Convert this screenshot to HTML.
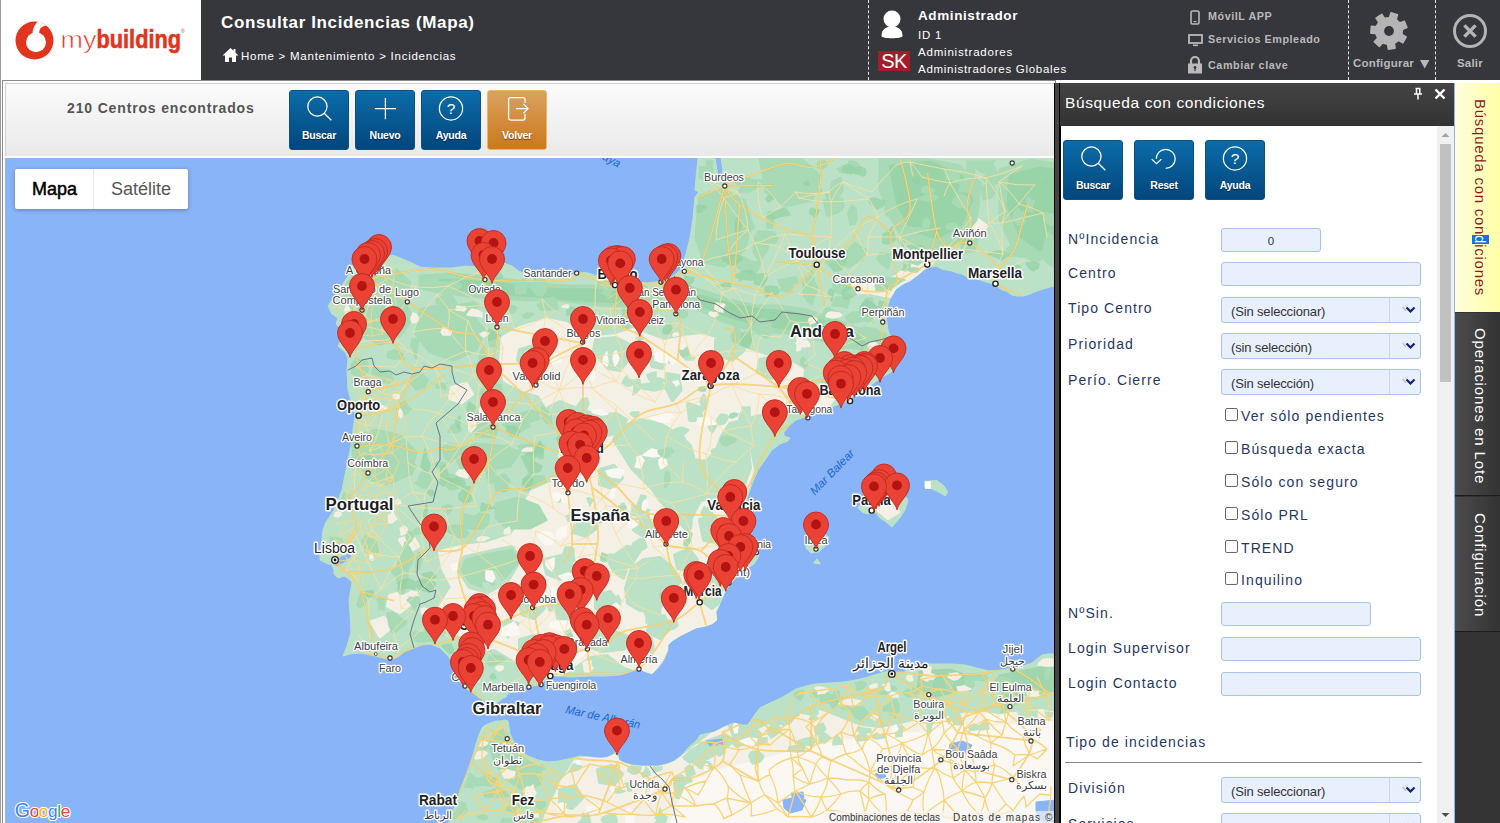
<!DOCTYPE html>
<html lang="es">
<head>
<meta charset="utf-8">
<title>Consultar Incidencias (Mapa)</title>
<style>
*{box-sizing:border-box;margin:0;padding:0}
html,body{width:1500px;height:823px;overflow:hidden;background:#fff;font-family:"Liberation Sans",sans-serif;}
body{position:relative}
.abs{position:absolute}
/* ---------- header ---------- */
#hdr{left:0;top:0;width:1500px;height:80px;background:#36373c;}
#logo{left:0;top:0;width:201px;height:80px;background:#fff;border-left:1px solid #9a9a9a}
#title{left:221px;top:13px;color:#fff;font-weight:bold;font-size:17px;letter-spacing:.62px;white-space:nowrap}
#crumb{left:241px;top:50px;color:#fff;font-size:11.5px;letter-spacing:.75px;white-space:nowrap}
.dash{top:0;width:0;height:80px;border-left:1px dashed #e8e8e8}
.u{color:#fff;white-space:nowrap;left:918px}
.lnk{color:#b9b9b9;font-weight:bold;font-size:10.8px;letter-spacing:.55px;white-space:nowrap;left:1208px}
/* ---------- toolbar ---------- */
#frame{left:2px;top:80px;width:1054px;height:745px;border:1px solid #8a8a8a;background:#fff}
#tbar{left:5px;top:83px;width:1050px;height:74px;background:linear-gradient(#fbfbfb,#e9e9e9);border:1px solid #d0d0d0;border-bottom:1px solid #fff}
#found{left:67px;top:100px;color:#555;font-weight:bold;font-size:14px;letter-spacing:.85px;white-space:nowrap}
.btn{width:60px;height:60px;border-radius:3px;background:linear-gradient(#0b6ca9,#03467c);border:1px solid #0a4f86;color:#fff;font-weight:bold;font-size:11px;text-align:center;text-shadow:0 1px 1px rgba(0,0,0,.5)}
.btn span{position:absolute;left:0;right:0;top:38px;letter-spacing:-.25px;font-size:10.5px}
.btn svg{position:absolute;left:13px;top:3px}
.btn.or{background:linear-gradient(#d9a25f,#cc781a);border:1px solid #ecb568}
/* ---------- map ---------- */
#map{left:5px;top:158px;width:1049px;height:665px;background:#8ab4f8;overflow:hidden}
/* ---------- right panel ---------- */
#pnl{left:1054px;top:83px;width:400px;height:740px;background:#fff;border-left:6px solid #444;box-shadow:inset 1px 0 0 #000}#pnlb{left:1054px;top:83px;width:6px;height:740px;background:#444;border-left:1px solid #000;border-right:1px solid #000}
#pnlh{left:1060px;top:83px;width:394px;height:43px;background:linear-gradient(#444,#333);color:#fff;font-size:15.5px;letter-spacing:.62px;padding:11px 0 0 5px}
.lab{left:1068px;margin-top:1px;color:#1f3864;font-size:14px;letter-spacing:1.1px;white-space:nowrap}
.inp{left:1221px;height:24px;background:#e8f0fd;border:1px solid #a9c3e8;border-radius:3px}
.sel{left:1221px;width:200px;height:26px;background:#e8f0fd;border:1px solid #a9c3e8;border-radius:3px;color:#333;font-size:13px;padding:6px 0 0 9px;letter-spacing:-.15px}
.sel i{position:absolute;right:30px;top:0;height:24px;width:1px;background:#c5d5ec}
.sel svg{position:absolute;right:2px;top:6px}
.chk{left:1225px;width:13px;height:13px;border:1px solid #666;border-radius:2px;background:#fff}
.cl{left:1241px;color:#1f3864;font-size:14px;letter-spacing:1.1px;white-space:nowrap}
/* ---------- tabs ---------- */
.tab{left:1455px;width:45px;color:#fff;font-size:15px;letter-spacing:.9px}
.tab b{position:absolute;font-weight:normal;white-space:nowrap;transform-origin:0 0;transform:rotate(90deg);left:34px}
</style>
</head>
<body>
<!-- HEADER -->
<div id="hdr" class="abs"></div>
<div id="logo" class="abs">
<svg width="200" height="80" viewBox="0 0 200 80" style="position:absolute;left:0;top:0">
<circle cx="33.5" cy="40.5" r="19" fill="#e1351d"/>
<circle cx="35" cy="42.3" r="10" fill="#fff"/>
<path d="M31.5 34.5 C31.5 28 34.5 24 37 21.3 L45.8 25.4 C41 25.8 37.6 28.5 38.4 33.8 Z" fill="#fff"/>
<text x="59.5" y="47.6" font-family="Liberation Sans, sans-serif" font-size="24.5" fill="#e1351d" stroke="#fff" stroke-width="0.6" textLength="36" lengthAdjust="spacingAndGlyphs">my</text>
<text x="95.5" y="47.6" font-family="Liberation Sans, sans-serif" font-weight="bold" font-size="25.5" fill="#e1351d" stroke="#e1351d" stroke-width="0.6" textLength="84.5" lengthAdjust="spacingAndGlyphs">building</text>
<text x="180" y="33" font-family="Liberation Sans, sans-serif" font-size="5" fill="#e1351d">®</text>
</svg>
</div>
<div id="title" class="abs">Consultar Incidencias (Mapa)</div>
<svg class="abs" style="left:222px;top:47px" width="17" height="16" viewBox="0 0 17 16"><path d="M8.5 1 L0.5 8.5 H3 V15 H7 V10.5 H10 V15 H14 V8.5 H16.5 L13.5 5.7 V2 H11.5 V3.8 Z" fill="#fff"/></svg>
<div id="crumb" class="abs">Home &gt; Mantenimiento &gt; Incidencias</div>
<div class="abs dash" style="left:868px"></div>
<div class="abs dash" style="left:1348px"></div>
<div class="abs dash" style="left:1435px"></div>
<!-- user -->
<svg class="abs" style="left:880px;top:10px" width="24" height="30" viewBox="0 0 24 30"><circle cx="12" cy="9" r="8.5" fill="#fff"/><path d="M1.5 26 C1.5 19 6 16.5 12 16.5 C18 16.5 22.5 19 22.5 26 C22.5 29 1.5 29 1.5 26Z" fill="#fff"/></svg>
<div class="abs" style="left:878px;top:51px;width:32px;height:20px;background:#a31d2b;color:#fff;font-size:20px;line-height:20px;text-align:center;letter-spacing:-.5px">SK</div>
<div class="abs u" style="top:8px;font-weight:bold;font-size:13.5px;letter-spacing:.6px">Administrador</div>
<div class="abs u" style="top:29px;font-size:11.5px;letter-spacing:.8px">ID 1</div>
<div class="abs u" style="top:46px;font-size:11.5px;letter-spacing:.8px">Administradores</div>
<div class="abs u" style="top:63px;font-size:11.5px;letter-spacing:.72px">Administradores Globales</div>
<!-- links -->
<svg class="abs" style="left:1190px;top:10px" width="10" height="15" viewBox="0 0 10 15"><rect x="1" y="1" width="8" height="13" rx="1.5" fill="none" stroke="#b9b9b9" stroke-width="1.6"/><rect x="3.5" y="11" width="3" height="1.2" fill="#b9b9b9"/></svg>
<svg class="abs" style="left:1188px;top:34px" width="15" height="13" viewBox="0 0 15 13"><rect x="1" y="1" width="13" height="8" fill="none" stroke="#b9b9b9" stroke-width="1.8"/><rect x="5" y="10.5" width="5" height="1.6" fill="#b9b9b9"/></svg>
<svg class="abs" style="left:1187px;top:55px" width="16" height="19" viewBox="0 0 16 19"><path d="M4 9 V6 a4 4 0 0 1 8 0 V9" fill="none" stroke="#b9b9b9" stroke-width="2.2"/><rect x="1" y="8.5" width="14" height="10" fill="#b9b9b9"/><circle cx="8" cy="12.5" r="1.4" fill="#35353b"/><rect x="7.4" y="13" width="1.2" height="3" fill="#35353b"/></svg>
<div class="abs lnk" style="top:10px">MóvilL APP</div>
<div class="abs lnk" style="top:33px">Servicios Empleado</div>
<div class="abs lnk" style="top:59px">Cambiar clave</div>
<!-- gear -->
<svg class="abs" style="left:1368px;top:10px" width="42" height="42" viewBox="-21 -21 42 42"><g fill="#b4b4b4"><circle r="14"/><rect x="-4.2" y="-18.7" width="8.4" height="8" rx="0.8" transform="rotate(17.0)"/><rect x="-4.2" y="-18.7" width="8.4" height="8" rx="0.8" transform="rotate(68.4)"/><rect x="-4.2" y="-18.7" width="8.4" height="8" rx="0.8" transform="rotate(119.9)"/><rect x="-4.2" y="-18.7" width="8.4" height="8" rx="0.8" transform="rotate(171.3)"/><rect x="-4.2" y="-18.7" width="8.4" height="8" rx="0.8" transform="rotate(222.7)"/><rect x="-4.2" y="-18.7" width="8.4" height="8" rx="0.8" transform="rotate(274.1)"/><rect x="-4.2" y="-18.7" width="8.4" height="8" rx="0.8" transform="rotate(325.6)"/></g><circle r="4.9" fill="#35353b"/></svg>
<div class="abs" style="left:1353px;top:57px;color:#b9b9b9;font-weight:bold;font-size:11.5px;letter-spacing:.22px;white-space:nowrap">Configurar</div><svg class="abs" style="left:1419.5px;top:59.5px" width="10" height="9"><path d="M0 0 H9.4 L4.7 8.4Z" fill="#b9b9b9"/></svg>
<svg class="abs" style="left:1452px;top:13px" width="36" height="36" viewBox="-18 -18 36 36"><circle r="15.5" fill="none" stroke="#b4b4b4" stroke-width="3"/><path d="M-5.6 -5.6 L5.6 5.6 M5.6 -5.6 L-5.6 5.6" stroke="#b4b4b4" stroke-width="3.4"/></svg>
<div class="abs" style="left:1457px;top:57px;color:#b9b9b9;font-weight:bold;font-size:11.5px;letter-spacing:.2px">Salir</div>

<div class="abs" style="left:0;top:0;width:1px;height:823px;background:#9a9a9a"></div>
<!-- TOOLBAR -->
<div id="frame" class="abs"></div>
<div id="tbar" class="abs"></div>
<div id="found" class="abs">210 Centros encontrados</div>
<div class="abs btn" style="left:289px;top:90px"><svg width="32" height="32" viewBox="0 0 32 32"><circle cx="14.4" cy="12.5" r="9.6" fill="none" stroke="#fff" stroke-width="1.25"/><path d="M21.2 19.3 L28.3 26.2" stroke="#fff" stroke-width="1.35"/></svg><span>Buscar</span></div>
<div class="abs btn" style="left:355px;top:90px"><svg width="32" height="32" viewBox="0 0 32 32"><path d="M16.4 4 V25.2 M5.8 14.6 H27" stroke="#fff" stroke-width="1.25"/></svg><span>Nuevo</span></div>
<div class="abs btn" style="left:421px;top:90px"><svg width="32" height="32" viewBox="0 0 32 32"><circle cx="16" cy="14.4" r="11.6" fill="none" stroke="#fff" stroke-width="1.25"/><text x="16" y="20" text-anchor="middle" font-family="Liberation Sans, sans-serif" font-weight="normal" font-size="15.5" fill="#fff" style="text-shadow:none">?</text></svg><span>Ayuda</span></div>
<div class="abs btn or" style="left:487px;top:90px"><svg width="32" height="32" viewBox="0 0 32 32"><path d="M24 9 V5.6 a2 2 0 0 0 -2 -2 H9.6 a2 2 0 0 0 -2 2 V24 a2 2 0 0 0 2 2 H22 a2 2 0 0 0 2 -2 V20" fill="none" stroke="#fff" stroke-width="1.25"/><path d="M15 14.6 H27 M22.4 10 L27 14.6 L22.4 19.2" fill="none" stroke="#fff" stroke-width="1.25"/></svg><span>Volver</span></div>

<!-- MAP -->
<div id="map" class="abs">
<svg width="1049" height="665" viewBox="5 158 1049 665" style="position:absolute;left:0;top:0;font-family:'Liberation Sans',sans-serif">
<defs><g id="mk"><path d="M0 24.4 C-1.2 17 -12.5 9.5 -12.5 0 A12.5 12.5 0 0 1 12.5 0 C12.5 9.5 1.2 17 0 24.4Z" fill="#ea4335" stroke="#c0281f" stroke-width="0.9"/><circle r="4.9" fill="#b31412"/></g></defs>
<g stroke-linejoin="round">
<path d="M698 158 L696 178 L695 190 L699 192 L695 197 L693 218 L690 238 L686 254 L682 268 L676 274 L667 279.5 L659 281.5 L647 283 L635 281.5 L625 281 L615 279.5 L604 277 L594 275 L586 272.5 L577 273 L568 276 L560 276 L550 276 L540 275 L530 274 L520 272 L512 266 L504 263 L496 265 L480 267 L466 266 L452 268 L440 268 L430 268 L420 267 L410 262 L398 257 L392 255 L385 258 L375 256 L368 258 L360 262 L352 266 L347 268 L350 274 L346 279 L341 287 L334 297 L328 306 L332 314 L338 318 L336 324 L340 328 L337 334 L341 340 L338 346 L345 352 L348 358 L347 370 L348 390 L352 404 L355 416 L353 430 L351 446 L348 460 L346 470 L342 490 L334 510 L326 522 L323 530 L322 540 L320 552 L320 560 L326 563 L332 565 L334 570 L334 574 L338 578 L345 576 L352 582 L349 600 L350 614 L351 632 L347 646 L343 656 L350 654 L360 653 L376 656 L390 660 L398 657 L404 652 L414 648 L422 645 L430 644 L440 648 L448 656 L452 662 L456 672 L460 680 L463 686 L468 690 L472 692 L478 697 L485 701 L492 703 L497 703 L502 699 L506 697 L508 693 L516 692 L528 687 L540 684.5 L550 676 L560 676 L572 677 L590 676 L605 676 L620 675 L630 672 L638 669 L646 672 L652 674 L658 668 L664 660 L668 650 L668 645 L672 641 L680 636 L696 628 L706 626 L712 624 L717 620 L716 612 L718 608 L724 594 L730 584 L740 574 L748 568 L754 564 L759 556 L756 548 L750 538 L748 532 L746 515 L747 498 L752 484 L758 470 L765 460 L772 450 L780 444 L788 441 L790 438 L784 436 L784 432 L790 425 L796 420 L808 416 L818 412 L828 408 L840 404 L849 400 L858 394 L866 388 L874 383 L880 378 L888 374 L894 370 L898 362 L897 355 L896 350 L893 344 L895 339 L890 336 L888 330 L886 315 L888 305 L890 299 L896 289 L903 284 L910 281 L918 275 L925 269 L931 267 L936 266 L942 269 L946 270 L952 271 L957 273 L962 274 L967 277 L975 278 L983 281 L990 283 L996 286 L1002 290 L1006 291 L1012 295 L1017 296 L1024 296 L1030 294 L1037 291 L1043 289 L1050 287 L1056 286 L1056 158Z" fill="#bbe2c6" stroke="#bbe2c6" stroke-width="1"/>
<path d="M448 825 L452 812 L456 805 L460 790 L466 775 L470 764 L474 752 L476 744 L479 735 L482 728 L484 726 L490 723 L496 721 L500 721 L505 720 L508 721 L509 727 L510 734 L513 740 L516 746 L522 752 L528 756 L538 760 L548 762 L558 761 L568 759 L580 756 L590 757 L600 758 L608 757 L614 754 L616 750 L618 755 L619 760 L625 763 L632 765 L642 766 L650 766 L658 766 L667 764 L674 761 L681 756 L688 748 L697 740 L700 735 L714 732 L724 727 L734 723 L742 725 L748 725 L754 716 L760 708 L770 703 L779 699 L788 694 L796 689 L806 686 L815 684 L830 683 L844 682 L856 680 L868 677 L878 674 L888 671 L896 672 L904 672 L910 668 L916 666 L928 664 L940 664 L952 664 L965 665 L977 668 L989 671 L1000 670 L1013 668 L1023 666 L1032 663 L1038 658 L1042 655 L1048 654 L1056 654 L1056 825Z" fill="#bbe2c6" stroke="#bbe2c6" stroke-width="1"/>
<path d="M858 508 L861 504 L870 497 L880 490 L892 485 L893 490 L897 492 L903 493 L908 500 L905 510 L899 519 L892 527 L886 522 L880 518 L876 513 L872 511 L868 514 L862 512Z" fill="#bbe2c6" stroke="#bbe2c6" stroke-width="1"/>
<path d="M924.5 481.3 L937 480.6 L944 486 L947.5 491.8 L945.4 496 L938.4 491.8 L930 488 L925 488Z" fill="#bbe2c6" stroke="#bbe2c6" stroke-width="1"/>
<path d="M806 540 L812 534 L822 532 L829 537 L826 545 L819 552 L811 553 L806 548Z" fill="#bbe2c6" stroke="#bbe2c6" stroke-width="1"/>
<path d="M813.5 563 L817 559 L820.5 564Z" fill="#bbe2c6" stroke="#bbe2c6" stroke-width="1"/>
</g>
<clipPath id="land"><path d="M698 158 L696 178 L695 190 L699 192 L695 197 L693 218 L690 238 L686 254 L682 268 L676 274 L667 279.5 L659 281.5 L647 283 L635 281.5 L625 281 L615 279.5 L604 277 L594 275 L586 272.5 L577 273 L568 276 L560 276 L550 276 L540 275 L530 274 L520 272 L512 266 L504 263 L496 265 L480 267 L466 266 L452 268 L440 268 L430 268 L420 267 L410 262 L398 257 L392 255 L385 258 L375 256 L368 258 L360 262 L352 266 L347 268 L350 274 L346 279 L341 287 L334 297 L328 306 L332 314 L338 318 L336 324 L340 328 L337 334 L341 340 L338 346 L345 352 L348 358 L347 370 L348 390 L352 404 L355 416 L353 430 L351 446 L348 460 L346 470 L342 490 L334 510 L326 522 L323 530 L322 540 L320 552 L320 560 L326 563 L332 565 L334 570 L334 574 L338 578 L345 576 L352 582 L349 600 L350 614 L351 632 L347 646 L343 656 L350 654 L360 653 L376 656 L390 660 L398 657 L404 652 L414 648 L422 645 L430 644 L440 648 L448 656 L452 662 L456 672 L460 680 L463 686 L468 690 L472 692 L478 697 L485 701 L492 703 L497 703 L502 699 L506 697 L508 693 L516 692 L528 687 L540 684.5 L550 676 L560 676 L572 677 L590 676 L605 676 L620 675 L630 672 L638 669 L646 672 L652 674 L658 668 L664 660 L668 650 L668 645 L672 641 L680 636 L696 628 L706 626 L712 624 L717 620 L716 612 L718 608 L724 594 L730 584 L740 574 L748 568 L754 564 L759 556 L756 548 L750 538 L748 532 L746 515 L747 498 L752 484 L758 470 L765 460 L772 450 L780 444 L788 441 L790 438 L784 436 L784 432 L790 425 L796 420 L808 416 L818 412 L828 408 L840 404 L849 400 L858 394 L866 388 L874 383 L880 378 L888 374 L894 370 L898 362 L897 355 L896 350 L893 344 L895 339 L890 336 L888 330 L886 315 L888 305 L890 299 L896 289 L903 284 L910 281 L918 275 L925 269 L931 267 L936 266 L942 269 L946 270 L952 271 L957 273 L962 274 L967 277 L975 278 L983 281 L990 283 L996 286 L1002 290 L1006 291 L1012 295 L1017 296 L1024 296 L1030 294 L1037 291 L1043 289 L1050 287 L1056 286 L1056 158Z" fill="#000" /><path d="M448 825 L452 812 L456 805 L460 790 L466 775 L470 764 L474 752 L476 744 L479 735 L482 728 L484 726 L490 723 L496 721 L500 721 L505 720 L508 721 L509 727 L510 734 L513 740 L516 746 L522 752 L528 756 L538 760 L548 762 L558 761 L568 759 L580 756 L590 757 L600 758 L608 757 L614 754 L616 750 L618 755 L619 760 L625 763 L632 765 L642 766 L650 766 L658 766 L667 764 L674 761 L681 756 L688 748 L697 740 L700 735 L714 732 L724 727 L734 723 L742 725 L748 725 L754 716 L760 708 L770 703 L779 699 L788 694 L796 689 L806 686 L815 684 L830 683 L844 682 L856 680 L868 677 L878 674 L888 671 L896 672 L904 672 L910 668 L916 666 L928 664 L940 664 L952 664 L965 665 L977 668 L989 671 L1000 670 L1013 668 L1023 666 L1032 663 L1038 658 L1042 655 L1048 654 L1056 654 L1056 825Z" fill="#000" /><path d="M858 508 L861 504 L870 497 L880 490 L892 485 L893 490 L897 492 L903 493 L908 500 L905 510 L899 519 L892 527 L886 522 L880 518 L876 513 L872 511 L868 514 L862 512Z" fill="#000" /><path d="M924.5 481.3 L937 480.6 L944 486 L947.5 491.8 L945.4 496 L938.4 491.8 L930 488 L925 488Z" fill="#000" /><path d="M806 540 L812 534 L822 532 L829 537 L826 545 L819 552 L811 553 L806 548Z" fill="#000" /><path d="M813.5 563 L817 559 L820.5 564Z" fill="#000" /></clipPath>
<g clip-path="url(#land)">
<path d="M503 338 L520 328 L547 320 L566 324 L580 334 L596 338 L616 336 L634 330 L648 336 L664 342 L684 338 L700 336 L716 340 L732 346 L750 352 L768 358 L788 362 L802 370 L800 386 L790 398 L776 408 L762 414 L752 430 L748 450 L752 470 L748 486 L744 500 L746 515 L748 532 L752 545 L745 560 L735 572 L727 588 L721 606 L718 622 L700 628 L680 636 L668 646 L660 662 L652 672 L640 670 L625 665 L608 652 L590 654 L575 664 L565 672 L550 677 L540 668 L520 662 L502 652 L488 651 L480 666 L470 678 L462 667 L472 646 L464 635 L448 630 L440 608 L453 587 L443 568 L440 552 L461 547 L488 544 L512 536 L525 520 L524 505 L532 492 L546 486 L557 482 L565 470 L560 455 L570 440 L575 425 L560 415 L548 407 L540 394 L520 388 L505 380 L501 360Z" fill="#f5f0e5" stroke="#f5f0e5" stroke-width="4" stroke-linejoin="round" opacity="1"/>
<path d="M576 760 L590 758 L604 760 L615 756 L620 763 L632 766 L645 766 L662 767 L675 763 L692 750 L709 737 L726 725 L738 721 L752 722 L760 710 L770 705 L780 701 L790 697 L800 703 L815 708 L830 715 L845 722 L862 728 L880 730 L900 724 L915 722 L930 718 L950 716 L965 712 L985 714 L1000 716 L1015 712 L1030 708 L1045 712 L1056 714 L1056 825 L543 825 L548 811 L556 796 L562 782 L570 770Z" fill="#f5f0e5" stroke="#f5f0e5" stroke-width="4" stroke-linejoin="round" opacity="1"/>
<path d="M452 388 L466 384 L472 394 L462 402 L450 398Z" fill="#f5f0e5" stroke="#f5f0e5" stroke-width="4" stroke-linejoin="round" opacity="1"/>
<path d="M470 420 L486 416 L494 426 L484 434 L470 430Z" fill="#f5f0e5" stroke="#f5f0e5" stroke-width="4" stroke-linejoin="round" opacity="1"/>
<path d="M452 552 L470 548 L480 556 L470 564 L452 562Z" fill="#f5f0e5" stroke="#f5f0e5" stroke-width="4" stroke-linejoin="round" opacity="1"/>
<path d="M842 286 L860 282 L880 284 L894 278 L908 268 L922 262 L932 262 L926 270 L912 278 L900 288 L890 296 L870 292 L850 292Z" fill="#f5f0e5" stroke="#f5f0e5" stroke-width="4" stroke-linejoin="round" opacity="1"/>
<path d="M944 232 L960 224 L978 220 L986 226 L976 236 L962 240 L950 244Z" fill="#f5f0e5" stroke="#f5f0e5" stroke-width="4" stroke-linejoin="round" opacity="1"/>
<path d="M903 220 L912 217 L915 224 L907 228Z" fill="#f5f0e5" stroke="#f5f0e5" stroke-width="4" stroke-linejoin="round" opacity="1"/>
<path d="M806 398 L822 392 L834 398 L826 408 L810 410Z" fill="#f5f0e5" stroke="#f5f0e5" stroke-width="4" stroke-linejoin="round" opacity="1"/>
<path d="M390 596 L404 592 L410 604 L400 612 L388 606Z" fill="#f5f0e5" stroke="#f5f0e5" stroke-width="4" stroke-linejoin="round" opacity="1"/>
<path d="M372 622 L384 618 L390 628 L380 636Z" fill="#f5f0e5" stroke="#f5f0e5" stroke-width="4" stroke-linejoin="round" opacity="1"/>
<path d="M400 540 L412 536 L418 546 L408 552Z" fill="#f5f0e5" stroke="#f5f0e5" stroke-width="4" stroke-linejoin="round" opacity="1"/>
<path d="M876 508 L890 504 L898 512 L888 518Z" fill="#f5f0e5" stroke="#f5f0e5" stroke-width="4" stroke-linejoin="round" opacity="1"/>
<path d="M464 557.5 L488 552 L512 547 L520 560 L507 581.6 L488 592 L469.5 587 L459 571Z" fill="#bbe2c6" stroke="#bbe2c6" stroke-width="4" stroke-linejoin="round" opacity="1"/>
<path d="M632 568 L644 560 L660 558 L672 568 L680 580 L672 596 L658 608 L640 610 L628 603 L626 588Z" fill="#bbe2c6" stroke="#bbe2c6" stroke-width="4" stroke-linejoin="round" opacity="1"/>
<path d="M587 635 L608.6 629.7 L630 637.8 L624.6 648.4 L603 651 L587 645.8Z" fill="#bbe2c6" stroke="#bbe2c6" stroke-width="4" stroke-linejoin="round" opacity="1"/>
<path d="M477.5 656.5 L493.6 651 L512 661.8 L517.6 678 L501.6 691 L485.6 683 L477.5 672.5Z" fill="#bbe2c6" stroke="#bbe2c6" stroke-width="4" stroke-linejoin="round" opacity="1"/>
<path d="M544 560 L565.8 555 L573.8 568 L560 579 L547 573.6Z" fill="#bbe2c6" stroke="#bbe2c6" stroke-width="4" stroke-linejoin="round" opacity="1"/>
<path d="M675 555 L689 549.5 L697 560 L691 571 L678 568Z" fill="#bbe2c6" stroke="#bbe2c6" stroke-width="4" stroke-linejoin="round" opacity="1"/>
<path d="M608.6 560 L627 547 L640.6 549.5 L630 565.6 L614 571Z" fill="#bbe2c6" stroke="#bbe2c6" stroke-width="4" stroke-linejoin="round" opacity="1"/>
<path d="M596 340 L616 338 L632 346 L628 360 L620 370 L608 368 L600 358 L594 350Z" fill="#bbe2c6" stroke="#bbe2c6" stroke-width="4" stroke-linejoin="round" opacity="1"/>
<path d="M650 358 L666 360 L662 368 L652 366Z" fill="#bbe2c6" stroke="#bbe2c6" stroke-width="4" stroke-linejoin="round" opacity="1"/>
<path d="M666.5 374 L678.5 376 L680.5 390 L672.5 400 L666.5 388Z" fill="#bbe2c6" stroke="#bbe2c6" stroke-width="4" stroke-linejoin="round" opacity="1"/>
<path d="M688 404 L700 408 L702 420 L690 420Z" fill="#bbe2c6" stroke="#bbe2c6" stroke-width="4" stroke-linejoin="round" opacity="1"/>
<path d="M548 408 L560 402 L580 410 L600 416 L616 414 L626 420 L618 432 L604 436 L590 430 L574 424 L558 418Z" fill="#bbe2c6" stroke="#bbe2c6" stroke-width="4" stroke-linejoin="round" opacity="1"/>
<path d="M620 428 L640 420 L660 424 L680 436 L690 446 L694 460 L706 462 L716 452 L722 436 L730 424 L746 420 L760 416 L752 432 L748 450 L750 468 L744 484 L733 482 L721 496 L700 500 L692 516 L680 524 L672 512 L660 500 L652 488 L644 480 L632 468 L622 452 L614 440Z" fill="#bbe2c6" stroke="#bbe2c6" stroke-width="4" stroke-linejoin="round" opacity="1"/>
<path d="M700 520 L714 516 L722 528 L716 542 L704 540Z" fill="#bbe2c6" stroke="#bbe2c6" stroke-width="4" stroke-linejoin="round" opacity="1"/>
<path d="M706 590 L718 586 L722 600 L712 608 L704 602Z" fill="#bbe2c6" stroke="#bbe2c6" stroke-width="4" stroke-linejoin="round" opacity="1"/>
<path d="M650 620 L664 616 L670 628 L660 638 L648 632Z" fill="#bbe2c6" stroke="#bbe2c6" stroke-width="4" stroke-linejoin="round" opacity="1"/>
<path d="M520 600 L536 596 L544 608 L534 618 L522 614Z" fill="#bbe2c6" stroke="#bbe2c6" stroke-width="4" stroke-linejoin="round" opacity="1"/>
<path d="M556 606 L570 602 L578 612 L570 622 L558 618Z" fill="#bbe2c6" stroke="#bbe2c6" stroke-width="4" stroke-linejoin="round" opacity="1"/>
<path d="M596 596 L610 592 L618 602 L608 612 L596 608Z" fill="#bbe2c6" stroke="#bbe2c6" stroke-width="4" stroke-linejoin="round" opacity="1"/>
<path d="M520 640 L534 636 L542 646 L532 654 L520 650Z" fill="#bbe2c6" stroke="#bbe2c6" stroke-width="4" stroke-linejoin="round" opacity="1"/>
<path d="M600 470 L614 466 L622 478 L612 488 L600 484Z" fill="#bbe2c6" stroke="#bbe2c6" stroke-width="4" stroke-linejoin="round" opacity="1"/>
<path d="M576 520 L590 516 L596 528 L586 536 L574 532Z" fill="#bbe2c6" stroke="#bbe2c6" stroke-width="4" stroke-linejoin="round" opacity="1"/>
<path d="M636 520 L648 516 L654 528 L644 536 L634 530Z" fill="#bbe2c6" stroke="#bbe2c6" stroke-width="4" stroke-linejoin="round" opacity="1"/>
<path d="M520 350 L534 346 L540 358 L530 366 L518 360Z" fill="#bbe2c6" stroke="#bbe2c6" stroke-width="4" stroke-linejoin="round" opacity="1"/>
<path d="M716 340 L734 338 L744 350 L732 360 L716 354Z" fill="#bbe2c6" stroke="#bbe2c6" stroke-width="4" stroke-linejoin="round" opacity="1"/>
<path d="M760 360 L776 356 L784 368 L772 378 L758 372Z" fill="#bbe2c6" stroke="#bbe2c6" stroke-width="4" stroke-linejoin="round" opacity="1"/>
<path d="M806 686 L840 684 L868 679 L890 674 L910 670 L940 666 L970 667 L1000 673 L1030 667 L1056 658 L1056 706 L1030 708 L1000 712 L975 708 L950 714 L925 716 L900 722 L880 726 L856 722 L836 714 L820 708 L806 700Z" fill="#bbe2c6" stroke="#bbe2c6" stroke-width="4" stroke-linejoin="round" opacity="1"/>
<path d="M729 724 L745 716 L762 708 L780 700 L800 694 L812 700 L800 710 L782 716 L764 724 L748 732 L734 736Z" fill="#bbe2c6" stroke="#bbe2c6" stroke-width="4" stroke-linejoin="round" opacity="1"/>
<path d="M690 752 L706 742 L722 736 L734 740 L722 750 L706 758 L694 762Z" fill="#bbe2c6" stroke="#bbe2c6" stroke-width="4" stroke-linejoin="round" opacity="1"/>
<path d="M675 783 L690 780 L698 790 L690 799 L677 797Z" fill="#bbe2c6" stroke="#bbe2c6" stroke-width="4" stroke-linejoin="round" opacity="1"/>
<path d="M598 770 L612 766 L622 774 L614 784 L600 782Z" fill="#bbe2c6" stroke="#bbe2c6" stroke-width="4" stroke-linejoin="round" opacity="1"/>
<path d="M560 790 L575 786 L582 798 L572 808 L560 804Z" fill="#bbe2c6" stroke="#bbe2c6" stroke-width="4" stroke-linejoin="round" opacity="1"/>
<path d="M1020 744 L1034 742 L1040 756 L1034 768 L1022 764Z" fill="#bbe2c6" stroke="#bbe2c6" stroke-width="4" stroke-linejoin="round" opacity="1"/>
<path d="M735 730 L752 726 L760 734 L750 744 L736 742Z" fill="#bbe2c6" stroke="#bbe2c6" stroke-width="4" stroke-linejoin="round" opacity="1"/>
<path d="M770 712 L786 706 L796 714 L788 724 L772 722Z" fill="#bbe2c6" stroke="#bbe2c6" stroke-width="4" stroke-linejoin="round" opacity="1"/>
<path d="M688 787 L720 772 L760 762 L812 749 L850 742 L895 737 L950 732 L1000 728 L1056 724 L1056 825 L672 825Z" fill="#fbf8f3" stroke="#fbf8f3" stroke-width="6" stroke-linejoin="round" opacity="1"/>
<path d="M686 286 L706 292 L730 300 L756 306 L780 306 L806 310 L830 318 L856 328 L880 334 L884 344 L866 350 L842 346 L820 340 L796 334 L770 332 L744 328 L720 320 L700 310 L686 298Z" fill="#a8dab5" stroke="#a8dab5" stroke-width="3" stroke-linejoin="round" opacity="1"/>
<path d="M420 276 L450 274 L480 276 L510 280 L540 284 L570 286 L600 286 L626 290 L650 292 L664 300 L650 308 L620 306 L590 304 L560 300 L530 300 L500 298 L470 296 L440 292 L420 288Z" fill="#a8dab5" stroke="#a8dab5" stroke-width="3" stroke-linejoin="round" opacity="1"/>
<path d="M350 280 L372 272 L396 270 L410 282 L404 300 L412 318 L400 336 L380 344 L362 336 L352 316 L344 298Z" fill="#a8dab5" stroke="#a8dab5" stroke-width="3" stroke-linejoin="round" opacity="1"/>
<path d="M420 310 L446 304 L470 312 L484 330 L476 350 L454 360 L430 352 L416 334Z" fill="#a8dab5" stroke="#a8dab5" stroke-width="3" stroke-linejoin="round" opacity="1"/>
<path d="M700 196 L722 190 L744 200 L752 224 L744 250 L724 266 L704 262 L696 238 L698 214Z" fill="#a8dab5" stroke="#a8dab5" stroke-width="3" stroke-linejoin="round" opacity="1"/>
<path d="M880 158 L920 158 L960 166 L980 190 L976 220 L956 244 L930 250 L904 240 L890 216 L880 190Z" fill="#a8dab5" stroke="#a8dab5" stroke-width="3" stroke-linejoin="round" opacity="1"/>
<path d="M1000 170 L1030 160 L1056 164 L1056 250 L1036 262 L1014 250 L1000 220Z" fill="#a8dab5" stroke="#a8dab5" stroke-width="3" stroke-linejoin="round" opacity="1"/>
<path d="M760 158 L800 158 L820 176 L812 200 L786 206 L766 192Z" fill="#a8dab5" stroke="#a8dab5" stroke-width="3" stroke-linejoin="round" opacity="1"/>
<path d="M352 438 L376 430 L400 436 L416 452 L410 474 L388 484 L366 478 L354 460Z" fill="#a8dab5" stroke="#a8dab5" stroke-width="3" stroke-linejoin="round" opacity="1"/>
<path d="M452 452 L476 444 L500 446 L520 452 L510 466 L486 470 L462 468Z" fill="#a8dab5" stroke="#a8dab5" stroke-width="3" stroke-linejoin="round" opacity="1"/>
<path d="M496 504 L518 498 L538 506 L546 520 L530 528 L508 528 L496 518Z" fill="#a8dab5" stroke="#a8dab5" stroke-width="3" stroke-linejoin="round" opacity="1"/>
<path d="M466 560 L490 554 L512 550 L518 562 L504 578 L486 588 L470 582 L462 570Z" fill="#a8dab5" stroke="#a8dab5" stroke-width="3" stroke-linejoin="round" opacity="1"/>
<path d="M494 734 L504 730 L512 744 L524 758 L540 768 L540 784 L524 790 L508 780 L496 764 L490 748Z" fill="#a8dab5" stroke="#a8dab5" stroke-width="3" stroke-linejoin="round" opacity="1"/>
<path d="M700 296 L730 304 L760 310 L790 312 L820 320 L850 330 L872 338 L860 344 L836 340 L810 334 L784 328 L756 324 L728 316 L704 306Z" fill="#94d2a5" stroke="#94d2a5" stroke-width="3" stroke-linejoin="round" opacity="0.7"/>
<path d="M440 280 L480 282 L520 286 L560 290 L600 290 L640 296 L620 302 L580 300 L540 296 L500 294 L460 290Z" fill="#94d2a5" stroke="#94d2a5" stroke-width="3" stroke-linejoin="round" opacity="0.7"/>
<path d="M1010 176 L1040 168 L1056 170 L1056 240 L1040 250 L1020 236 L1008 206Z" fill="#94d2a5" stroke="#94d2a5" stroke-width="3" stroke-linejoin="round" opacity="0.7"/>
<path d="M890 166 L930 162 L962 176 L972 200 L960 226 L936 238 L912 230 L898 206Z" fill="#94d2a5" stroke="#94d2a5" stroke-width="3" stroke-linejoin="round" opacity="0.7"/>
<path d="M1000 676 L1030 670 L1056 664 L1056 690 L1030 694 L1004 696Z" fill="#94d2a5" stroke="#94d2a5" stroke-width="3" stroke-linejoin="round" opacity="0.7"/>
<path d="M920 672 L950 670 L966 676 L960 690 L936 696 L918 688Z" fill="#94d2a5" stroke="#94d2a5" stroke-width="3" stroke-linejoin="round" opacity="0.7"/>
<path d="M742 271 751 274 758 270 761 262 751 261 741 256 735 262 738 268ZM639 326 643 326 641 324 638 322 634 323 632 325 633 326 633 326 634 326 634 326 634 326 635 326 635 326 636 326 636 327ZM818 162 817 167 822 169 827 166 826 162 824 161 821 161ZM1032 212 1032 209 1034 201 1031 200 1028 197 1027 201 1028 206 1028 211ZM967 167 966 175 968 178 972 180 975 173 974 165 974 161 967 161ZM479 523 477 517 464 514 464 522 463 527 469 529 479 529ZM361 381 352 382 360 385 364 387 371 385 376 384 371 381 367 378ZM395 447 400 448 401 447 405 446 404 442 398 442 397 445ZM529 287 534 291 537 295 542 296 546 291 547 286 547 282 542 278 536 278ZM557 305 556 301 554 297 548 299 545 301 537 305 541 310 550 310 558 309ZM466 537 469 533 467 531 462 526 454 525 445 527 445 531 451 535 455 538ZM397 567 391 570 393 574 397 577 400 572 402 569ZM992 181 987 184 981 187 983 200 991 198 996 192ZM929 220 927 218 924 220 923 226 923 231 925 229 928 232 928 227 930 223ZM598 281 598 286 604 286 608 287 608 283 609 281 603 280 598 279ZM362 541 365 552 370 551 371 543 372 538 366 535ZM916 260 919 254 918 250 912 250 909 250 905 257 913 261ZM445 458 451 463 456 454 457 445 452 444 448 443 442 448ZM897 278 886 278 883 283 890 290 892 289 893 287 894 287 894 287 894 287 894 287 901 282 902 281 902 281 905 280ZM541 409 543 419 546 423 548 423 552 424 551 415 551 414 546 410 545 410 545 410 545 409 545 409 543 406ZM849 268 859 261 862 255 850 254 844 257 840 264ZM561 435 566 433 568 431 567 428 563 426 560 430ZM843 190 841 177 832 182 830 192 836 200 840 196ZM371 330 364 330 362 333 365 333 368 335 372 336 380 334 376 333 377 330ZM643 319 647 313 650 305 648 299 644 295 639 298 637 306 633 313 639 318ZM408 412 411 409 407 405 405 401 400 404 401 408 403 411 405 415ZM703 180 711 177 712 175 713 169 708 166 702 167 700 167 699 177ZM456 433 462 430 459 426 454 424 450 428 448 432ZM955 168 951 168 945 171 946 179 950 179 956 183 959 179 959 174ZM705 227 706 223 702 220 700 223 699 227 702 228ZM716 199 710 191 704 196 707 207 712 211 715 208ZM990 186 998 183 1002 179 1001 175 988 175 981 178ZM625 288 626 289 630 289 637 287 635 286 631 285 625 285ZM531 316 534 314 532 313 526 313 525 315 523 315 524 318 529 318ZM404 359 404 355 395 350 388 352 387 356 388 358 395 359ZM767 215 767 228 772 228 774 219 772 213 769 211ZM496 491 500 491 504 492 508 490 507 486 505 486 499 485 499 488ZM1052 214 1044 213 1044 221 1051 225 1053 225 1053 214ZM865 317 860 312 853 312 848 315 845 317 847 321 853 323 859 322 867 319ZM802 283 803 285 806 288 810 291 811 286 812 282 809 281 806 277ZM877 259 882 265 888 269 891 260 891 254 880 253ZM407 531 406 537 408 544 411 541 414 536 411 532ZM1006 249 1010 253 1008 256 1018 256 1021 252 1021 249 1019 248 1012 245ZM839 349 851 348 857 342 844 337 839 337 828 341ZM494 445 496 448 493 451 497 455 503 454 507 453 510 448 508 445 500 446ZM492 420 494 418 490 411 481 408 470 416 479 422ZM400 594 402 594 405 593 405 589 403 587 402 585 399 587 398 591ZM491 666 503 661 506 659 501 656 490 655 486 663ZM499 298 495 294 490 294 490 298 491 301 495 305 498 301ZM1012 219 1017 224 1019 225 1025 222 1024 212 1020 212 1018 208 1014 213ZM410 464 408 465 406 469 408 473 412 475 414 470 416 466 414 463ZM389 625 392 633 397 631 402 627 407 622 398 616 393 612 387 613ZM678 312 678 317 684 318 688 315 687 313 686 309 685 306 682 304 675 307ZM813 292 812 289 811 288 807 284 806 290 803 291 804 297 808 298 812 294ZM340 506 348 506 351 503 351 499 349 495 344 493 344 493 339 505ZM384 610 384 603 385 599 380 597 377 599 379 604 379 610 381 609ZM916 268 912 268 910 269 909 271 914 272 917 272 920 269ZM455 291 457 289 461 287 461 284 453 280 449 283 441 282 441 288 448 288ZM907 229 902 231 908 233 913 234 917 233 922 230 921 228 913 228 910 227ZM1024 247 1020 251 1017 253 1019 257 1022 257 1026 257 1026 254 1026 248ZM936 199 938 197 932 194 926 195 918 199 923 200 931 201ZM484 346 481 351 479 357 481 364 485 368 487 358 487 354ZM367 598 367 593 361 592 359 597 357 605 360 608 365 604ZM631 316 630 307 627 307 622 307 624 327 627 328 630 327ZM435 637 436 633 428 633 414 632 410 635 416 641 420 642 421 642 421 642 422 642 430 641 430 641 430 641 431 641 431 641 431 641 434 642ZM766 338 770 336 771 324 766 319 760 319 755 324 755 332ZM338 301 338 305 341 303 342 299 341 294 340 293 337 298ZM812 188 812 190 809 193 812 194 817 194 820 193 822 191 822 190 819 189ZM545 446 530 444 518 446 521 451 528 455 543 452ZM856 371 855 366 850 367 847 368 846 372 846 376 850 379 854 381 855 374ZM888 364 882 358 879 366 877 373 877 376 878 376 878 375 879 375 886 371 890 369ZM958 193 952 203 959 208 969 206 970 198 962 195ZM839 256 836 248 827 249 820 251 824 260 829 266ZM767 244 778 240 774 232 758 231 754 238 755 244ZM680 288 677 288 674 290 671 292 672 293 676 295 678 293 681 292ZM826 195 827 199 829 200 833 201 837 200 835 196 834 195 831 192 826 194ZM514 313 517 308 514 306 509 305 509 309 509 313ZM436 385 436 388 442 388 445 390 446 387 447 383 444 383 440 384ZM327 551 334 550 333 547 328 546 324 546 323 552ZM1053 237 1048 232 1044 244 1044 250 1045 261 1053 267 1053 258 1053 257 1053 237ZM416 339 412 339 411 346 413 349 416 359 417 351 418 345 419 339ZM343 345 351 354 354 348 355 332 351 329 342 336 343 338 344 339 344 339 344 339 344 339 344 340 344 340 344 340 344 341 344 341 344 341 344 341 343 343ZM750 222 745 225 737 225 736 230 744 232 748 232 752 230 755 227ZM486 418 478 419 477 428 487 430 493 425 495 416ZM808 365 806 360 803 357 801 359 800 364 804 367 804 367 805 367 805 367 805 368 805 368 805 368ZM761 239 763 242 768 243 776 243 778 238 772 235 765 235ZM399 561 401 566 406 574 412 563 414 557 410 548 405 542 403 552ZM847 308 849 302 850 299 842 297 836 297 835 298 833 303 832 306 841 306ZM422 560 419 551 417 556 416 564 416 572 420 567ZM487 341 488 346 496 347 497 337 494 331 488 334ZM973 234 967 233 963 232 961 241 961 250 966 248 973 247ZM679 313 680 311 680 308 679 305 676 306 674 306 674 310 674 312 676 313ZM444 345 444 340 439 338 437 336 431 337 431 342 432 346 437 348 440 347ZM369 545 367 552 372 554 379 552 377 542 372 538ZM396 292 398 295 405 296 415 296 412 293 408 290 401 290ZM447 479 446 486 450 490 457 489 462 486 460 483 459 480 458 476 449 474ZM975 251 978 239 971 235 966 230 962 241 965 254 969 252ZM451 511 453 507 449 505 445 506 442 507 444 511 448 514ZM830 324 828 322 826 322 824 324 826 327 827 329 829 326 830 326ZM706 162 707 165 708 169 711 170 712 166 713 161 706 161ZM943 237 951 240 951 243 966 243 970 239 979 236 967 231 958 234ZM744 176 734 182 741 187 738 192 749 192 756 188 764 184 763 180 753 180ZM438 627 430 625 425 628 425 633 431 635 437 635 444 635 445 633 445 633 445 632 445 632 444 632 444 631 443 628ZM976 168 979 171 984 173 989 171 988 168 981 167ZM742 335 737 334 734 336 738 339 741 339 743 337ZM850 256 846 256 845 257 845 260 850 259 854 260 856 257 855 256ZM491 370 483 371 483 373 484 377 493 377 499 375 496 373ZM486 475 489 483 492 483 496 476 496 472 493 468 491 464 487 466ZM882 333 878 337 880 340 884 342 891 342 891 342 890 340 888 339 888 338 888 338 888 338 888 338 887 338 887 337 887 337 886 333ZM640 285 637 288 643 290 648 290 647 287 645 286 640 285ZM342 541 342 539 337 538 330 537 330 541 330 543 334 545 344 544ZM992 162 985 164 984 173 989 177 993 178 998 176 996 170ZM463 330 461 324 459 324 458 323 456 328 457 332 458 336 461 334 462 335ZM346 285 351 289 357 289 359 284 361 279 361 275 354 273 353 274 353 274 353 275 353 275 353 275 353 275 353 276 352 276 348 281 346 284ZM608 290 617 290 615 286 614 282 606 282 602 283 596 286 601 289ZM822 316 827 319 831 320 836 321 838 316 842 313 834 311 829 308 825 309ZM539 482 542 479 533 478 527 479 527 482 526 485 530 489 530 489 530 489 530 488 539 484ZM473 302 464 304 456 305 459 309 467 311 471 314 475 308 480 306ZM507 487 510 481 505 474 499 476 496 478 494 481 496 491 501 490 507 491ZM778 280 780 286 788 287 794 284 798 282 796 277 789 278 785 279ZM444 303 447 301 443 301 442 300 437 299 437 301 436 303 438 304 442 304ZM922 188 922 192 927 193 934 192 934 189 930 188 926 186ZM544 476 535 476 530 477 523 479 523 490 528 491 529 490 529 490 529 489 529 489 530 489 530 489 530 488 544 482 545 482 546 482ZM409 381 416 390 425 387 428 380 422 373 410 377ZM421 534 423 533 426 531 424 529 420 528 417 528 414 530 413 532 415 534ZM743 341 741 333 736 323 735 330 731 336 733 342 733 342 743 345ZM850 168 847 172 852 173 855 172 861 172 860 167 859 165 856 162 852 161 849 161ZM419 598 414 595 412 596 407 600 412 605 414 610 417 605 420 605ZM857 171 853 168 844 166 837 169 841 173 847 173ZM511 431 521 432 530 426 525 416 514 418 503 425ZM857 263 863 260 867 250 855 243 850 247 846 253 848 257ZM887 216 891 218 892 215 895 209 892 203 890 206 886 205 885 211 885 213ZM445 463 438 462 433 464 437 467 441 468 446 465ZM946 226 947 229 955 229 961 228 957 225 955 223 948 224ZM751 339 747 335 741 339 741 345 749 348ZM866 341 872 342 884 335 876 329 863 327 860 336ZM352 374 361 377 368 372 368 363 356 358 351 365ZM864 321 873 322 875 312 875 307 872 298 867 298 860 307 861 315ZM492 421 482 422 473 432 477 437 495 438 498 428ZM812 269 809 277 803 280 803 292 807 301 812 305 815 295 818 288 815 283ZM899 243 901 246 904 246 905 242 906 240 904 233 901 236 898 237 898 240ZM792 288 793 284 782 283 782 287 780 290 787 292 792 292ZM871 360 865 356 850 360 853 363 858 371 872 370 873 366 874 363ZM372 374 375 376 378 376 380 374 379 370 376 366 373 367ZM850 208 848 212 848 215 850 225 855 224 857 219 856 211 856 208 852 205ZM450 313 446 309 439 309 432 315 437 319 444 321 448 318ZM368 303 370 307 376 307 385 302 381 301 379 296 372 296 366 299ZM398 559 397 572 397 584 405 586 408 577 408 559 401 558ZM390 294 397 294 404 289 400 283 393 279 387 280 382 283 375 288 381 295ZM375 471 380 467 374 463 365 464 358 467 363 471ZM379 370 379 381 384 383 392 383 393 379 391 373 386 370ZM436 300 438 303 441 307 448 308 457 304 452 295 445 294ZM829 388 831 383 830 378 825 377 822 382 824 388ZM465 520 468 525 472 529 480 529 487 527 489 520 489 515 479 513 474 517ZM522 413 512 414 514 419 523 423 531 422 540 419 538 412 530 410ZM825 208 827 216 835 214 842 210 844 206 842 198 834 201 823 200ZM427 488 430 483 431 478 428 473 424 469 419 476 418 480 415 483 422 488ZM844 276 839 280 833 282 833 288 834 291 840 294 848 290 851 288 850 282ZM386 316 392 310 393 301 392 291 389 289 384 300ZM976 178 968 180 958 181 961 186 959 191 971 193 978 191 982 184ZM860 379 850 376 839 376 839 380 840 383 847 386 856 390 860 384 861 381ZM768 249 770 238 759 233 754 243 753 251 759 261 765 254ZM976 164 982 170 990 166 995 161 975 161ZM968 163 972 166 976 168 978 164 978 161 969 161ZM907 253 905 256 904 260 912 263 918 265 925 260 923 257 922 252 916 253ZM519 281 517 282 515 286 516 294 520 294 526 293 527 286 525 279ZM543 409 543 411 544 414 549 414 549 413 546 410 545 410 545 410 545 409 545 409 544 408ZM612 291 611 286 607 288 601 293 607 296 610 295ZM842 376 848 375 859 372 859 368 855 366 836 364 831 366 833 372ZM502 386 490 379 483 387 480 394 491 399 501 394Z" fill="#a8dab5" stroke="#a8dab5" stroke-width="1.5" stroke-linejoin="round" opacity="1"/>
<path d="M431 496 435 495 434 492 433 491 429 490 427 492 429 494ZM687 284 689 285 692 283 694 278 689 277 685 276 685 281ZM885 303 883 302 880 301 879 304 879 306 882 309 884 307 885 307 885 304 885 304 886 303ZM451 332 452 330 449 328 447 329 446 331 447 333 450 334ZM467 414 467 416 471 419 474 416 474 413 476 407 472 404 469 402 467 408ZM437 529 436 530 436 535 436 539 439 537 440 532 439 527ZM531 457 530 451 525 456 522 457 525 464 526 467 530 469 533 465 534 458ZM872 311 875 310 876 308 871 306 869 304 868 308 866 310 868 311 872 311ZM494 332 489 329 485 334 488 337 489 341 495 338 499 336 499 336 500 336 500 336 500 335 500 335 500 335ZM843 290 842 294 845 299 852 297 856 294 852 288 847 287ZM496 678 495 676 494 674 492 674 490 677 492 679ZM532 485 533 480 529 474 524 479 522 484 529 489 529 489 529 489 530 489 530 489ZM883 234 883 243 887 244 891 243 895 240 896 238 893 232 892 227 888 232ZM1016 270 1020 269 1020 266 1015 265 1009 266 1009 268ZM454 653 453 649 451 644 444 645 442 646 442 646 442 646 449 653ZM776 295 779 292 777 287 771 286 765 287 765 292 766 297 771 295ZM409 579 403 580 399 582 398 589 408 588 415 589 415 582ZM898 196 899 202 901 206 906 204 904 198 902 191ZM739 262 743 258 740 256 730 254 722 257 723 261 732 265ZM888 288 887 286 885 285 882 281 878 282 875 286 876 288 876 290 882 291ZM494 390 493 388 491 386 487 387 488 391 490 391ZM459 499 464 503 468 502 472 500 470 493 469 489 462 491 459 494ZM763 286 767 279 767 273 756 275 754 280 755 284ZM1043 183 1045 184 1050 183 1048 181 1046 180 1042 181ZM892 349 890 348 887 350 885 353 885 355 889 356 893 355 894 353 893 351 893 350ZM424 507 424 510 423 513 424 517 425 516 426 514 427 513 427 507 426 505ZM428 473 430 464 427 458 425 449 423 458 421 467 424 469ZM741 272 738 275 740 279 752 280 758 275 750 270ZM476 366 483 370 496 367 497 364 495 361 482 360 479 362ZM804 183 805 185 807 185 809 185 809 183 808 181 807 182ZM521 457 529 459 533 457 538 456 536 452 530 452 526 455ZM540 441 537 446 535 450 538 456 539 458 543 458 543 447ZM567 309 567 312 567 315 573 315 579 313 577 310 572 307ZM444 486 446 482 448 474 446 468 445 465 441 467 441 476 440 484ZM459 429 460 423 460 416 456 420 456 423 457 427ZM913 253 918 252 927 250 924 248 922 246 914 245 907 246 912 249ZM852 166 848 164 844 166 842 171 851 174 853 171 855 169ZM904 267 902 270 906 271 909 269 910 267 910 265 904 264ZM819 210 816 210 812 208 810 210 810 214 813 215 815 217 818 213ZM726 289 731 287 730 286 730 283 725 283 723 284 719 285 717 286 721 287ZM785 208 777 211 773 212 766 216 773 219 782 216 790 215 789 213ZM564 436 562 435 557 438 558 442 561 443 563 443 566 439ZM453 479 448 478 449 481 451 484 455 486 459 485 465 484 464 480 458 477ZM693 290 691 287 688 284 685 287 682 291 689 291ZM481 511 486 510 489 509 495 508 490 505 486 505 482 503 481 507ZM988 254 996 257 1002 260 1010 254 1001 251 996 251ZM766 199 768 202 773 199 772 195 769 196 767 197ZM372 595 373 593 373 591 367 591 365 593 365 595 367 596 369 597 374 597ZM838 271 843 269 841 264 839 260 835 262 831 264 830 266 834 271ZM880 200 875 198 869 199 870 203 875 207 877 209 883 206 885 201ZM701 212 703 209 707 207 700 205 697 206 697 212ZM470 487 465 486 462 486 462 488 462 490 466 490 469 491 471 489ZM435 586 435 583 427 579 419 580 414 584 419 589 429 592ZM736 221 735 225 736 233 737 231 739 231 741 228 741 224 739 219 737 218ZM969 242 967 237 965 234 963 235 959 236 960 244 964 244 967 244ZM520 430 517 428 514 426 507 426 507 431 509 434 512 436 517 437ZM832 301 832 297 834 292 831 289 830 289 828 294 829 297 831 300ZM862 305 860 310 866 311 869 312 874 309 879 308 872 303 866 300 864 302ZM749 345 752 340 752 333 749 331 742 333 742 339 741 345 747 347ZM913 179 913 181 915 184 917 185 920 183 919 178 917 175ZM431 572 422 574 423 577 429 580 436 577 435 575ZM845 250 843 251 842 254 841 259 842 261 844 264 845 264 847 257 847 251ZM864 176 866 173 865 169 860 167 852 169 846 171 857 174ZM370 651 372 649 371 646 369 645 364 644 363 648 366 650ZM540 471 542 466 538 464 534 462 528 464 528 471 531 474ZM373 456 364 457 354 461 358 467 367 466 373 463ZM1026 263 1029 268 1033 271 1038 268 1039 264 1033 262ZM498 279 503 277 500 273 493 273 487 274 485 277 485 280ZM744 278 744 276 743 274 740 274 737 274 736 277 739 278 740 281 743 279ZM670 325 666 326 663 329 663 332 665 334 672 333 671 331 672 328Z" fill="#94d2a5" stroke="#94d2a5" stroke-width="1.5" stroke-linejoin="round" opacity="0.75"/>
<path d="M441 332 443 335 450 335 452 331 447 329 443 328ZM679 334 677 333 675 333 673 334 673 336 674 336 679 335ZM384 628 385 624 380 622 376 624 374 625 377 630ZM424 608 421 609 421 611 422 614 424 614 427 614 427 611 427 609ZM496 669 499 671 502 670 503 669 503 666 500 666 498 666 496 667ZM477 316 482 317 482 313 479 311 475 310 472 309 469 312 467 315 474 316ZM459 470 456 474 459 476 464 477 467 478 470 474 469 471 464 470ZM532 448 527 448 524 449 522 451 527 451 532 451ZM411 591 410 592 407 594 410 596 414 596 418 595 417 592 414 592ZM348 318 349 313 350 310 348 306 346 306 345 310 346 318ZM584 669 585 672 590 672 593 668 591 666 591 661 587 661 583 663ZM338 517 341 515 341 513 337 512 337 512 336 512 334 516ZM810 324 816 322 817 319 813 317 809 319 809 322ZM723 312 722 309 725 305 723 304 720 304 716 303 715 306 715 309 718 311ZM831 312 828 313 826 316 827 317 833 318 839 317 842 315 840 313ZM456 310 459 310 464 311 466 309 465 308 465 307 462 307 457 306 457 308ZM803 336 799 336 797 336 797 342 797 351 800 350 802 345ZM391 514 388 516 389 523 392 523 394 521 397 519 394 515 393 510ZM510 530 509 527 507 529 505 530 504 533 505 534 510 533 510 532ZM397 500 395 502 395 505 398 504 401 503 400 501 398 499ZM386 308 386 313 388 318 391 315 392 309 388 305ZM418 317 416 314 413 313 411 318 411 320 413 323 417 322 418 320ZM486 539 489 538 486 537 481 537 478 538 477 540 480 541 485 540ZM709 314 710 315 714 317 718 315 717 313 710 312ZM562 307 564 307 568 308 568 305 566 305 563 306ZM400 409 399 411 399 415 401 418 402 417 402 412ZM491 411 486 410 483 407 480 408 479 411 482 413 483 414 487 412ZM796 343 801 346 804 347 810 346 809 343 806 340 801 342ZM878 345 877 344 873 342 870 343 868 347 872 349 875 349 879 349ZM401 528 400 528 401 531 401 535 404 534 406 533 407 531 407 528 404 526ZM393 398 396 399 399 398 399 395 394 394 393 396ZM372 560 373 560 373 557 372 555 372 554 371 555 370 555 370 559 371 560ZM374 411 379 410 381 411 386 409 387 408 383 406 379 405 374 406 375 408ZM489 333 486 333 484 332 482 333 480 334 482 336 484 337 485 336 487 335Z" fill="#f5f0e5" stroke="#f5f0e5" stroke-width="1.5" stroke-linejoin="round" opacity="1"/>
<path d="M702 397 700 401 702 407 703 411 706 407 706 399 704 394ZM639 412 635 412 632 412 630 414 634 417 638 416ZM647 547 644 539 639 539 633 543 632 546 636 550 643 550ZM642 508 638 507 632 505 632 510 631 515 636 516 642 515 650 510ZM479 600 477 604 479 607 481 606 482 603 481 600ZM619 356 622 351 623 345 615 340 610 347 609 351ZM571 632 570 630 567 630 564 631 565 633 567 635 570 635ZM723 489 724 497 732 495 733 492 734 486 730 482 726 484ZM486 573 487 575 488 576 490 575 492 575 491 573 490 572 487 572ZM744 420 746 425 750 424 750 415 750 407 745 407 742 407 743 417ZM725 581 722 574 720 583 717 588 720 594 721 596 724 587 724 587 727 582ZM621 509 622 513 624 514 626 510 625 505 624 503 621 504ZM661 382 651 383 638 385 643 389 654 391 667 388ZM490 575 488 580 494 582 497 584 501 579 497 575 495 571ZM625 567 617 565 613 570 617 575 624 579 627 571ZM619 608 620 604 621 601 618 595 616 598 614 599 613 600 613 605 616 606ZM515 631 519 623 509 620 502 623 506 631 508 638ZM603 603 599 614 607 617 609 613 612 606 609 600ZM571 547 565 547 563 554 563 558 565 561 568 563 575 561 574 556 574 549ZM720 425 725 423 728 418 727 415 721 414 717 419 716 422ZM649 650 651 653 654 649 653 642 652 638 650 636 649 643 647 645ZM566 516 568 521 582 523 589 520 587 516 583 514 576 513ZM706 522 710 520 713 517 713 514 710 509 704 507 701 513 703 516ZM514 590 512 592 513 603 514 604 516 604 518 602 519 596 518 589 517 586ZM640 508 644 509 645 506 645 501 646 496 641 495 639 500 637 505ZM730 491 729 487 727 483 725 484 719 484 716 486 718 490 720 493 729 495ZM549 347 544 349 544 352 546 354 551 353 552 349ZM703 586 698 583 697 578 691 574 689 581 684 581 686 588 691 592 696 591ZM683 518 683 523 682 527 686 530 691 529 692 524 692 517 688 517ZM713 449 711 451 712 453 718 456 725 456 731 452 728 448 721 448ZM450 622 454 623 455 622 456 616 453 613 449 614 449 618ZM709 580 712 586 715 585 720 585 720 578 718 570 714 575 709 576ZM598 604 600 606 610 606 610 603 617 601 607 599 602 597 597 598 595 602ZM677 621 668 620 664 624 667 630 674 629 678 626ZM558 600 556 590 554 590 551 591 550 600 551 604 554 605 558 605ZM630 386 634 384 634 380 629 380 626 376 623 381 622 383 625 385 626 386ZM587 398 582 399 577 406 581 410 587 409 589 403ZM583 640 591 643 597 639 597 634 592 627 578 634ZM557 497 557 499 558 502 560 502 563 499 562 497 560 495ZM589 503 590 506 591 503 593 500 590 498 589 498 587 498 588 502ZM659 603 654 595 651 604 649 609 652 620 655 623 660 615 661 608ZM676 470 670 465 664 463 662 467 660 473 667 473ZM548 607 549 611 552 611 556 605 555 600 552 599 548 596ZM734 518 735 524 736 529 740 531 740 521 739 515ZM476 645 479 638 476 633 474 632 470 637 471 639 474 644 475 644 475 645 475 645 475 645 475 646 475 646 475 646 475 646 475 647ZM663 524 662 529 667 530 671 529 677 528 675 525 673 519 668 519 665 522ZM596 583 599 582 595 580 592 581 588 583 592 585ZM634 387 633 395 637 392 641 388 640 380 637 379 634 382ZM603 609 598 610 597 615 599 619 604 621 607 623 610 616 610 610ZM552 640 552 639 552 634 550 633 548 635 547 639 548 643 550 642ZM686 360 693 360 695 358 693 357 688 356 684 358ZM646 623 653 623 658 621 660 619 661 614 657 612 649 610 644 612 646 617ZM632 575 630 577 633 582 635 582 637 579 635 575 633 572ZM745 418 741 412 739 418 740 424 742 429 745 428 747 423ZM615 556 612 554 605 555 600 556 602 560 605 562 611 560 613 558ZM570 609 569 607 568 607 567 612 568 613 569 615 570 615 571 614ZM486 582 483 583 483 586 486 589 491 586 488 583ZM636 362 636 355 633 347 630 351 629 357 632 364ZM641 336 639 337 636 338 638 339 640 341 642 339 644 338 641 336ZM717 425 712 423 708 426 710 430 712 433 715 429ZM689 430 682 427 675 429 671 434 678 435 683 436ZM651 381 650 384 656 384 660 383 665 381 664 380 660 378 654 378ZM656 372 651 373 647 375 648 378 649 380 656 382 655 378 656 376ZM670 501 669 498 667 500 663 500 663 501 663 504 665 505 668 503 671 503ZM666 358 663 357 653 356 647 358 649 361 656 362 662 363 670 363ZM680 439 681 442 685 442 685 438 682 435 680 437ZM644 561 642 561 643 565 644 566 646 566 647 563 648 561 645 559ZM629 552 626 557 628 564 631 569 634 560 633 545ZM477 646 486 643 481 638 473 639 471 640 474 644 475 644 475 645 475 645 475 645 475 646 475 646 475 646ZM610 600 606 602 605 607 608 614 611 612 613 607 611 604Z" fill="#bbe2c6" stroke="#bbe2c6" stroke-width="1.5" stroke-linejoin="round" opacity="1"/>
<path d="M553 586 552 590 551 594 553 598 556 598 559 592 556 590ZM574 575 568 573 559 576 562 579 569 581 577 580 579 577ZM593 423 588 422 587 426 590 428 593 428 598 426 596 424ZM457 570 457 567 457 563 455 564 452 564 452 566 453 571 454 570ZM660 414 658 416 651 418 655 420 660 422 670 422 669 419 673 417 670 413ZM671 356 670 360 672 364 674 363 676 361 674 356ZM677 385 679 384 678 381 676 381 673 382 675 384 676 386ZM584 653 578 650 571 651 569 656 572 659 577 659 586 653ZM552 494 554 498 555 500 558 501 560 498 560 495 558 492 555 494ZM573 626 573 629 574 631 575 633 581 636 584 632 588 628 582 627 579 623ZM645 500 643 503 642 510 645 511 647 507 647 501ZM628 522 627 523 627 526 632 528 637 525 639 523 638 521 632 520ZM562 362 558 357 558 353 554 354 550 355 548 358 549 361 552 364 557 362ZM613 359 614 362 615 366 617 363 618 361 619 358 617 354 616 351 614 353ZM666 460 661 458 659 460 659 464 661 469 667 465ZM554 566 554 558 550 560 546 561 546 565 548 568 552 571ZM536 606 539 607 540 606 544 604 541 603 538 602 536 602 534 604ZM724 533 724 529 721 521 719 518 716 524 716 530 717 535 720 536ZM616 603 612 606 607 608 610 611 614 616 619 616 620 611 620 607ZM571 604 569 602 566 604 566 609 568 614 570 611ZM569 621 560 621 550 623 550 627 565 631 570 626ZM593 380 595 377 594 371 591 373 589 374 588 375 589 380ZM519 634 518 628 514 622 503 628 503 634 510 636ZM561 493 562 501 564 503 568 502 567 496 565 495ZM612 498 614 498 614 495 615 489 612 489 611 492 610 497ZM557 531 556 537 559 540 563 536 566 536 566 531 567 526 563 527 559 528ZM659 451 652 449 647 452 643 455 653 457 660 456 661 454ZM744 490 739 491 737 492 740 497 742 498 744 490ZM599 410 593 410 592 412 594 413 598 414 602 415 608 414 605 412 603 410ZM589 648 588 647 586 645 584 648 584 651 587 653 587 653 588 652 589 651 589 651 589 651 589 651ZM486 571 486 575 486 579 487 580 492 582 495 578 492 571ZM531 545 529 544 526 544 525 547 528 549 532 548ZM702 425 708 425 716 424 714 421 711 418 704 418 698 418 697 423ZM546 651 548 650 548 643 547 638 546 636 544 637 542 643 544 648ZM642 464 644 461 641 456 637 457 637 462 635 467 641 468ZM607 355 607 352 604 357 603 361 603 363 605 364 607 366 608 362ZM619 469 615 469 610 470 606 471 608 475 612 477 620 478 623 473 624 471ZM662 521 662 517 659 513 654 515 650 517 652 520 653 523 658 525ZM541 540 546 545 552 544 554 539 552 533 543 532 538 535ZM668 353 659 351 655 354 655 360 660 362 667 363 668 359Z" fill="#fbf8f3" stroke="#fbf8f3" stroke-width="1.5" stroke-linejoin="round" opacity="1"/>
<path d="M568 478 570 482 572 485 574 485 577 481 576 477 573 477ZM599 522 600 523 603 521 606 519 604 514 602 512 599 512 597 516 596 518ZM667 448 665 449 658 451 659 454 664 457 669 457 671 453 674 452 671 448ZM718 546 720 548 722 549 724 548 728 547 726 546 724 546 721 544ZM736 441 736 439 727 436 721 438 720 440 722 445 726 446 735 442ZM571 640 571 640 573 637 572 635 570 632 569 633 568 636 569 638 569 640ZM665 488 669 483 670 479 669 473 667 471 665 474 665 480ZM664 597 666 596 665 593 663 592 661 593 660 594 660 597 662 598ZM671 517 669 516 669 520 669 524 671 526 673 522ZM712 561 710 565 713 567 715 568 717 565 719 563 718 560 715 558 713 559ZM685 356 690 355 689 354 689 351 687 347 683 351 679 350 681 355 683 357ZM685 536 684 545 687 546 689 544 690 541 692 534 688 529 687 532ZM601 560 603 561 605 561 607 556 605 554 604 554 602 553 601 558ZM720 563 722 568 723 569 725 573 729 572 729 568 730 565 726 563 724 562ZM705 391 706 389 702 387 699 388 698 390 701 391ZM616 508 616 511 621 514 625 511 626 507 620 506ZM540 579 540 578 539 576 537 575 534 576 531 577 533 578 535 580 538 580ZM736 416 737 416 738 414 734 413 731 414 730 415 729 417 732 418Z" fill="#a8dab5" stroke="#a8dab5" stroke-width="1.5" stroke-linejoin="round" opacity="1"/>
<path d="M538 820 535 814 532 813 532 818 532 822 539 822ZM516 821 512 819 503 819 501 822 501 822 517 822ZM970 674 965 678 967 688 970 691 974 686 974 675ZM525 779 524 781 525 782 529 782 529 780 530 778 529 777 527 777 526 777ZM483 777 483 781 488 782 491 779 490 776 486 775ZM819 691 815 690 811 693 811 696 815 698 822 695ZM511 747 512 749 512 752 513 752 514 753 516 751 516 750 514 748 514 748 513 748 513 747 513 746ZM509 796 506 792 497 787 493 790 483 793 485 797 495 797 500 797ZM801 698 803 696 804 690 797 692 794 694 794 696 799 699ZM899 710 899 705 896 699 890 702 888 709 888 713 895 718ZM953 683 953 678 949 672 944 678 946 686 950 690ZM881 694 881 695 884 696 885 695 888 693 886 691 883 691 881 692 879 693ZM928 679 929 682 931 685 933 682 932 679 931 678ZM964 685 965 688 967 688 968 689 970 687 970 684 968 680 966 679 965 683ZM460 818 462 816 467 810 465 803 461 802 460 802 459 806 459 806 459 806 459 806 455 813 453 819ZM988 678 986 675 984 675 979 675 975 676 975 680 980 680 984 681ZM861 720 869 714 863 707 857 707 849 709 856 718ZM477 817 480 819 484 820 488 818 486 816 482 815ZM933 675 930 673 928 679 926 686 926 692 928 695 932 692 932 684ZM1009 705 1016 704 1020 703 1019 702 1014 701 1011 700 1008 702 1008 704ZM886 711 890 709 889 708 888 705 884 707 884 708 883 711ZM517 806 521 808 527 808 534 804 532 803 528 801 525 799 519 800 513 804ZM531 802 532 806 535 808 540 810 545 806 546 803 541 801 535 802ZM539 768 539 770 543 770 545 768 544 767 543 765 540 765 537 767ZM1008 704 1011 700 1008 699 1006 698 1001 697 1000 702 1002 707 1002 709 1008 709ZM1014 686 1009 679 1002 677 998 677 994 683 1001 688 1002 691 1008 689ZM916 696 919 692 917 689 913 688 912 693 912 696ZM492 786 496 781 492 779 487 776 476 779 474 783 476 786 484 785ZM1051 669 1049 667 1047 666 1046 669 1046 671 1047 673 1047 676 1049 676 1050 672ZM895 687 892 686 890 686 887 688 888 689 887 692 894 691 897 689ZM1005 711 1006 706 1004 705 1002 708 1001 713 1005 711ZM528 803 533 801 533 789 531 785 525 784 523 791 519 797 523 801ZM847 710 852 710 854 707 856 703 848 704 845 706 841 708ZM835 691 833 695 830 704 833 709 838 706 839 699 839 692ZM1048 679 1048 674 1047 668 1045 668 1045 675 1046 679ZM488 744 490 741 486 740 484 739 482 742 480 746 481 749 485 750 488 748ZM497 779 495 778 493 778 489 778 486 779 489 781 493 783 496 783 496 781ZM829 703 830 700 833 699 835 697 829 694 823 692 822 695 820 698 821 702ZM919 682 922 683 925 684 929 682 927 680 924 679 921 681ZM468 786 474 785 474 783 476 781 468 778 468 778 465 786ZM795 693 797 697 797 698 801 700 801 699 803 696 801 693 800 691 797 692 796 692ZM468 787 473 788 474 783 476 778 471 774 469 774 469 776 469 776 465 787ZM857 687 856 691 861 689 865 687 866 683 862 682 862 681 857 683 856 683 855 683ZM518 807 513 805 507 807 507 811 512 813 515 811ZM913 694 911 691 908 689 906 691 902 693 906 695 908 697 911 696Z" fill="#a8dab5" stroke="#a8dab5" stroke-width="1.5" stroke-linejoin="round" opacity="1"/>
<path d="M527 787 523 791 525 797 528 799 533 797 536 793 534 790 533 785 531 787ZM1053 659 1045 659 1042 660 1039 663 1038 665 1045 666 1053 666 1053 659ZM968 688 965 686 957 687 958 689 958 691 966 690 971 689ZM924 672 924 677 926 675 930 676 931 667 931 667 928 667 922 668ZM839 704 852 705 859 704 861 701 851 699 842 701ZM877 687 877 684 875 684 872 685 870 686 870 688 874 689 875 687ZM930 679 933 679 936 676 932 674 929 673 925 676 921 678 923 679 927 681ZM482 746 486 745 486 745 488 743 483 741 480 742 480 742 479 745 479 746ZM889 683 887 684 886 685 885 687 886 690 888 691 890 690 890 688 889 684ZM1039 696 1038 693 1039 692 1033 691 1031 692 1027 693 1028 696 1033 696 1035 696ZM501 771 503 775 505 778 514 778 515 772 511 771 505 769ZM509 765 507 761 504 761 499 763 498 765 501 767 505 766ZM898 695 897 694 892 692 890 694 890 695 892 697 898 697ZM889 685 886 684 883 685 884 687 885 688 888 688 890 687ZM911 681 913 680 912 678 912 675 909 675 907 676 907 679 908 680 910 681ZM535 813 533 813 529 814 530 816 536 817 538 817 538 814 538 813ZM871 718 873 718 874 720 876 719 878 717 876 716 874 715 873 715ZM954 680 958 679 961 676 957 673 950 674 948 677ZM476 759 482 758 484 756 487 753 483 751 479 752 477 753 477 753 477 753 477 753 475 758ZM815 688 818 691 818 694 825 693 828 690 827 689 821 687 818 687Z" fill="#f5f0e5" stroke="#f5f0e5" stroke-width="1.5" stroke-linejoin="round" opacity="1"/>
<path d="M684 759 688 762 691 758 691 752 690 751 683 757ZM646 771 645 771 642 773 642 775 643 777 648 776 650 775 650 773 650 772ZM762 760 764 756 758 751 753 753 750 757 753 763 756 763 760 762 760 762ZM662 822 664 818 662 813 660 808 659 812 658 815 656 824 659 824 660 825 662 825ZM666 824 664 819 657 820 654 825 666 825ZM811 720 812 720 815 719 817 718 817 717 815 715 813 716 811 717 809 719ZM803 739 796 742 802 744 812 746 816 741 813 737ZM868 737 865 733 859 735 857 736 857 741 868 740ZM679 782 682 784 686 782 691 782 690 778 684 777 682 775 676 777 674 780ZM948 719 948 722 956 726 963 724 961 718 960 715 958 714 951 716ZM725 752 724 750 721 748 717 749 713 752 716 754 719 756 723 754ZM743 733 734 735 731 742 736 747 746 744 747 740ZM769 722 769 724 775 724 778 723 778 720 776 720 772 718 770 720ZM653 767 653 772 658 771 662 769 662 767 654 767ZM590 820 588 813 584 820 582 825 591 825ZM795 716 798 716 799 714 799 710 798 707 796 709 795 710ZM778 724 770 726 767 732 771 738 776 735 781 731ZM699 756 700 759 705 760 710 758 714 755 706 754 702 753ZM808 706 801 705 801 710 801 713 811 715 818 714 818 709 815 708 809 706ZM815 727 816 735 821 734 826 729 823 723 819 725ZM767 742 767 738 759 738 757 738 746 741 754 743 757 745 762 744ZM781 718 781 723 784 725 788 722 786 710 782 710ZM931 728 933 726 934 723 930 722 926 722 927 725ZM735 741 741 743 744 741 745 738 740 736 736 737 733 739ZM631 766 628 768 628 771 633 774 636 774 640 771 641 769 641 767 639 766 635 766ZM883 738 886 737 884 734 879 735 877 733 872 736 873 738 877 739 877 739 882 738ZM1045 713 1047 716 1048 717 1050 717 1052 716 1053 713 1045 712ZM658 820 658 823 663 823 666 821 667 817 662 814 658 814 655 818ZM841 740 837 735 834 739 833 741 833 745 842 744ZM989 729 988 723 984 722 979 726 980 730 989 729ZM691 759 688 760 688 762 690 763 694 762 697 762 699 760 695 759ZM983 729 980 727 974 724 970 726 967 729 968 731 982 729ZM712 768 712 765 709 762 703 761 694 763 697 766 699 768 704 769ZM569 772 578 770 582 767 578 765 573 764 570 770 569 772ZM688 766 685 768 687 777 691 776 695 774 693 767 690 765ZM753 757 755 757 757 754 755 751 751 752 749 755 749 757ZM649 771 648 769 646 767 645 771 645 774 646 775 650 775ZM945 726 948 727 949 728 950 724 950 719 948 719 948 719 947 720 946 724ZM759 761 756 758 752 753 750 758 751 762 753 764 757 763ZM588 824 590 819 586 817 583 813 582 819 578 823 580 825 587 825ZM804 748 805 745 799 745 794 746 789 747 788 751 798 752 798 752 805 751ZM617 823 617 819 615 814 612 814 603 817 601 820 605 824 607 825 614 825ZM614 792 616 793 620 793 625 791 620 790 620 788 615 789 610 791ZM902 732 903 728 899 725 896 725 896 725 894 726 896 735 896 737 902 736ZM857 730 860 733 863 734 866 733 871 732 871 729 862 728 858 727ZM933 728 933 723 930 721 927 724 927 727 928 731 929 734 931 732 934 731ZM1018 714 1021 714 1024 716 1027 715 1027 713 1029 711 1025 710 1023 710 1022 710 1019 711ZM631 791 632 786 632 782 628 783 625 783 627 786 628 791ZM819 742 825 743 831 738 826 734 821 731 819 737ZM1025 718 1030 718 1037 718 1037 715 1037 712 1032 711 1028 712 1024 713 1020 715Z" fill="#bbe2c6" stroke="#bbe2c6" stroke-width="1.5" stroke-linejoin="round" opacity="1"/>
<path d="M968 729 967 727 965 726 961 726 959 729 961 731 962 731 968 731ZM648 795 646 792 643 796 644 799 646 802 649 801 650 797ZM634 824 633 811 628 808 625 815 626 825 633 825ZM704 768 705 774 707 771 708 768 707 764 705 765ZM611 790 611 791 612 795 613 796 614 792 614 790 614 788 612 787ZM738 742 748 745 751 745 756 742 757 739 750 738 743 740ZM735 724 733 727 735 733 736 731 737 733 738 727 738 723 738 721 735 722ZM556 805 558 809 560 810 564 809 566 804 561 803ZM985 716 987 719 993 723 997 718 996 715 986 714ZM577 764 579 764 580 763 580 760 580 759 577 760ZM719 770 716 769 714 768 711 770 708 771 708 772 710 773 713 774 716 774 717 773ZM939 723 936 721 933 726 932 734 939 733ZM947 723 939 722 939 727 941 732 947 730 949 727ZM1000 719 1003 721 1007 724 1008 720 1010 717 1011 713 1001 716ZM588 812 594 812 599 813 604 810 602 806 595 806 587 807 587 810ZM787 735 787 735 789 736 790 732 790 727 788 726 787 725 786 728 786 732ZM651 779 647 785 647 790 651 795 654 790 653 784ZM954 731 954 729 954 726 951 722 950 724 949 726 950 732 950 732 954 732ZM894 726 893 727 892 731 894 731 896 731 898 729 897 727 896 725 894 726ZM956 726 954 727 954 729 958 731 962 729 962 727Z" fill="#fbf8f3" stroke="#fbf8f3" stroke-width="1.5" stroke-linejoin="round" opacity="1"/>
<path d="M783 800 L796 797 L806 800 L802 810 L790 813 L784 808Z" fill="#8ab4f8" stroke="#8ab4f8" stroke-width="1" stroke-linejoin="round" opacity="1"/>
<path d="M1036 802 L1056 800 L1056 822 L1042 822 L1036 812Z" fill="#8ab4f8" stroke="#8ab4f8" stroke-width="1" stroke-linejoin="round" opacity="1"/>
<path d="M950 744 L962 741 L972 745 L968 752 L956 754 L949 750Z" fill="#8ab4f8" stroke="#8ab4f8" stroke-width="1" stroke-linejoin="round" opacity="1"/>
<path d="M875 774 L884 772 L886 777 L878 779Z" fill="#8ab4f8" stroke="#8ab4f8" stroke-width="1" stroke-linejoin="round" opacity="1"/>
<path d="M791 793 L803 792 L804 798 L793 799Z" fill="#8ab4f8" stroke="#8ab4f8" stroke-width="1" stroke-linejoin="round" opacity="1"/>
<path d="M706 741 L722 739 L724 744 L710 746Z" fill="#8ab4f8" stroke="#8ab4f8" stroke-width="1" stroke-linejoin="round" opacity="1"/>
<path d="M716 158 L720 158 L722 172 L719 176Z" fill="#8ab4f8" stroke="#8ab4f8" stroke-width="1" stroke-linejoin="round" opacity="1"/>
<path d="M333 563 L340 558 L349 553 L351 557 L344 562 L337 566Z" fill="#8ab4f8" stroke="#8ab4f8" stroke-width="1" stroke-linejoin="round" opacity="1"/>
<path d="M896 165Q903 162 910 162M896 165Q884 178 872 192M910 162Q927 166 944 169M910 162Q911 169 913 176M910 162Q917 169 922 177M944 169Q948 175 950 183M944 169Q965 171 986 178M1022 166Q1004 174 986 178M1022 166Q1011 173 999 182M705 178Q720 188 738 192M705 178Q716 187 724 198M738 192Q731 196 724 198M738 192Q747 210 748 230M758 182Q757 201 762 218M758 182Q772 192 780 207M796 192Q812 195 829 192M796 192Q788 200 780 207M796 192Q797 195 799 198M829 192Q835 185 843 182M829 192Q814 194 799 198M829 192Q829 197 831 202M843 182Q858 188 872 192M843 182Q836 191 831 202M843 182Q856 191 869 199M922 177Q936 181 950 183M950 183Q967 177 986 178M950 183Q946 189 944 196M950 183Q960 201 971 218M986 178Q998 193 1005 211M986 178Q987 201 989 223M999 182Q1017 186 1035 185M999 182Q1001 197 1005 211M999 182Q1011 191 1019 204M1035 185Q1026 194 1019 204M724 198Q716 218 716 240M724 198Q735 215 748 230M762 218Q772 213 780 207M799 198Q815 202 831 202M831 202Q850 201 869 199M831 202Q832 219 831 237M869 199Q875 208 878 217M878 217Q896 204 917 199M878 217Q865 222 854 230M878 217Q874 227 868 237M917 199Q909 219 899 237M971 218Q962 229 954 241M971 218Q970 234 964 249M1005 211Q997 218 989 223M1005 211Q1004 217 1002 223M1019 204Q1032 207 1043 213M1019 204Q1009 212 1002 223M1043 213Q1023 218 1002 223M1043 213Q1045 225 1047 237M716 240Q732 234 748 230M748 230Q735 240 727 255M748 230Q750 237 755 243M771 237Q778 236 785 234M771 237Q763 242 755 243M785 234Q808 236 831 237M785 234Q783 241 780 247M785 234Q790 248 797 261M831 237Q811 245 797 261M831 237Q830 245 828 253M854 230Q842 243 828 253M854 230Q860 243 867 255M868 237Q883 237 899 237M868 237Q869 246 867 255M899 237Q919 231 940 228M899 237Q907 249 917 260M899 237Q916 246 934 255M899 237Q901 253 908 267M954 241Q945 250 934 255M989 223Q995 223 1002 223M989 223Q975 235 964 249M989 223Q999 237 1003 254M1002 223Q1001 238 1003 254M698 263Q712 257 727 255M698 263Q712 274 722 288M727 255Q742 252 755 243M755 243Q767 244 780 247M755 243Q762 259 765 277M780 247Q789 253 797 261M780 247Q773 262 765 277M797 261Q812 256 828 253M797 261Q780 267 765 277M797 261Q801 273 806 285M797 261Q804 270 814 276M828 253Q823 266 814 276M828 253Q838 264 849 274M867 255Q876 254 885 254M867 255Q857 263 849 274M917 260Q925 256 934 255M934 255Q950 255 964 249M964 249Q984 252 1003 254M1003 254Q997 268 986 278M1025 260Q1006 269 986 278M388 278Q401 285 416 287M388 278Q378 284 371 293M416 287Q432 289 448 286M416 287Q407 298 401 310M448 286Q464 277 481 272M448 286Q443 291 437 295M448 286Q468 294 486 305M481 272Q491 278 499 288M481 272Q485 288 486 305M499 288Q501 289 502 291M596 281Q595 295 595 308M639 286Q624 297 610 309M639 286Q636 298 636 309M639 286Q655 293 672 297M690 269Q707 278 722 288M690 269Q708 278 722 293M722 288Q728 288 734 288M734 288Q728 291 722 293M734 288Q744 292 755 295M734 288Q747 305 751 325M765 277Q760 286 755 295M806 285Q810 281 814 276M806 285Q802 290 798 294M806 285Q819 289 831 297M849 274Q860 284 868 296M869 273Q866 285 868 296M869 273Q880 282 889 294M908 267Q899 280 889 294M339 307Q354 298 371 293M339 307Q349 317 360 325M371 293Q385 304 401 310M371 293Q369 310 360 325M401 310Q381 319 360 325M401 310Q396 322 394 335M437 295Q444 302 449 310M437 295Q421 311 413 332M449 310Q467 306 486 305M449 310Q450 319 448 328M449 310Q459 316 468 321M486 305Q493 298 502 291M502 291Q494 303 487 316M502 291Q507 311 515 330M542 299Q548 306 555 311M542 299Q544 308 546 317M555 311Q551 314 546 317M595 308Q602 309 610 309M595 308Q579 317 569 332M610 309Q623 307 636 309M610 309Q612 319 614 328M636 309Q654 304 672 297M636 309Q632 314 628 319M636 309Q647 314 655 324M722 293Q719 315 708 335M722 293Q740 306 751 325M755 295Q764 296 772 293M755 295Q752 310 751 325M772 293Q760 308 751 325M772 293Q782 307 790 321M798 294Q814 294 831 297M831 297Q823 312 810 322M889 294Q882 311 869 325M360 325Q377 328 394 335M360 325Q356 336 346 344M394 335Q391 338 387 340M394 335Q400 344 408 351M413 332Q430 328 448 328M448 328Q455 341 466 351M468 321Q464 336 466 351M468 321Q476 340 489 355M487 316Q486 336 489 355M487 316Q498 331 503 348M515 330Q531 326 546 317M546 317Q559 323 569 332M546 317Q542 336 538 356M569 332Q553 344 538 356M569 332Q569 344 572 355M614 328Q621 323 628 319M614 328Q617 341 623 352M655 324Q667 324 679 323M655 324Q659 335 665 345M679 323Q692 332 708 335M679 323Q669 332 665 345M679 323Q686 339 691 356M708 335Q699 344 691 356M751 325Q743 341 728 351M751 325Q751 339 757 352M762 335Q757 343 757 352M762 335Q771 337 781 337M790 321Q800 324 810 322M790 321Q785 329 781 337M810 322Q813 338 815 354M848 324Q840 336 835 349M848 324Q856 333 866 338M346 344Q367 340 387 340M387 340Q398 346 408 351M408 351Q414 353 420 356M408 351Q402 359 395 367M420 356Q426 361 434 366M466 351Q477 355 489 355M466 351Q449 357 434 366M466 351Q472 363 474 376M489 355Q497 353 503 348M489 355Q482 365 474 376M489 355Q495 362 501 367M503 348Q502 358 501 367M538 356Q544 361 551 363M572 355Q583 356 594 357M572 355Q561 357 551 363M572 355Q580 359 587 365M572 355Q564 372 559 390M594 357Q609 355 623 352M594 357Q590 360 587 365M594 357Q608 367 616 381M594 357Q608 364 622 370M623 352Q631 345 640 337M623 352Q621 361 622 370M665 345Q662 364 667 382M691 356Q710 356 728 351M691 356Q699 368 707 382M728 351Q743 350 757 352M728 351Q732 362 734 373M757 352Q758 362 759 372M815 354Q811 359 805 363M835 349Q850 342 866 338M835 349Q849 360 857 376M355 366Q375 366 395 367M355 366Q371 376 385 390M418 360Q411 378 400 392M434 366Q455 368 474 376M434 366Q414 376 400 392M434 366Q441 381 441 397M434 366Q442 381 454 393M474 376Q464 384 454 393M474 376Q476 381 479 385M501 367Q488 373 479 385M525 371Q537 365 551 363M525 371Q514 387 502 402M525 371Q532 387 533 405M525 371Q540 384 559 390M551 363Q554 377 559 390M587 365Q601 375 616 381M587 365Q576 380 559 390M587 365Q588 377 592 388M616 381Q619 376 622 370M616 381Q604 383 592 388M616 381Q634 395 655 402M622 370Q638 386 655 402M667 382Q661 392 655 402M734 373Q734 379 732 385M759 372Q746 379 732 385M759 372Q773 385 787 398M759 372Q782 377 803 385M805 363Q816 368 829 372M829 372Q816 377 803 385M829 372Q835 381 845 386M857 376Q850 380 845 386M869 380Q857 383 845 386M359 400Q359 405 361 410M400 392Q390 399 383 409M441 397Q447 394 454 393M454 393Q446 404 438 413M454 393Q466 409 472 427M479 385Q491 392 502 402M479 385Q478 406 472 427M502 402Q518 402 533 405M502 402Q489 418 472 427M502 402Q510 413 523 419M533 405Q546 397 559 390M533 405Q529 413 523 419M533 405Q541 410 549 415M559 390Q576 386 592 388M559 390Q553 402 549 415M559 390Q564 402 569 413M592 388Q603 398 616 405M592 388Q604 400 616 410M616 405Q617 408 616 410M616 405Q624 414 633 421M676 404Q693 399 710 396M676 404Q678 409 681 413M710 396Q720 389 732 385M710 396Q694 402 681 413M732 385Q745 392 759 394M732 385Q741 406 751 426M759 394Q773 394 787 398M759 394Q759 411 751 426M759 394Q768 401 776 408M787 398Q795 392 803 385M787 398Q784 411 784 423M803 385Q824 384 845 386M803 385Q790 402 784 423M361 410Q372 409 383 409M361 410Q370 430 370 451M383 409Q381 432 370 451M413 409Q426 409 438 413M438 413Q456 417 472 427M438 413Q427 423 422 436M438 413Q450 429 460 446M472 427Q486 418 503 416M472 427Q466 437 460 446M503 416Q489 424 475 432M523 419Q518 432 512 444M549 415Q559 413 569 413M569 413Q575 429 587 441M616 410Q602 426 587 441M616 410Q620 429 629 445M633 421Q650 416 668 412M633 421Q644 431 655 441M668 412Q675 412 681 413M681 413Q672 423 667 436M711 417Q713 432 710 447M711 417Q718 423 723 431M751 426Q737 427 723 431M751 426Q752 436 754 446M370 451Q388 444 406 437M406 437Q414 437 422 436M406 437Q407 450 408 463M422 436Q440 444 460 446M422 436Q433 455 437 476M460 446Q451 463 437 476M475 432Q495 434 512 444M475 432Q471 445 462 455M512 444Q498 452 488 463M535 436Q551 433 567 431M535 436Q532 455 534 474M587 441Q608 447 629 445M587 441Q587 451 588 461M629 445Q633 450 638 455M667 436Q664 449 663 463M667 436Q685 449 706 454M710 447Q708 450 706 454M723 431Q739 436 754 446M754 446Q744 453 736 462M356 463Q353 481 355 498M356 463Q362 475 372 484M393 476Q383 480 372 484M408 463Q422 472 437 476M408 463Q408 478 413 492M437 476Q449 465 462 455M437 476Q430 485 425 494M437 476Q445 480 453 484M488 463Q479 478 473 495M488 463Q501 481 520 492M488 463Q488 485 492 507M534 474Q526 482 520 492M588 461Q593 469 598 475M598 475Q580 484 559 488M598 475Q602 487 602 499M638 455Q643 471 644 489M663 463Q674 471 683 482M684 462Q682 472 683 482M706 454Q720 460 736 462M706 454Q709 474 707 494M736 462Q718 475 707 494M413 492Q419 494 425 494M413 492Q404 498 393 504M413 492Q418 500 424 508M425 494Q424 501 424 508M453 484Q464 488 473 495M473 495Q475 500 476 506M520 492Q517 506 517 521M520 492Q538 498 553 508M548 478Q550 493 553 508M559 488Q582 490 602 499M602 499Q610 491 616 483M602 499Q590 513 576 524M602 499Q605 502 606 506M616 483Q630 486 644 489M616 483Q627 500 639 516M644 489Q663 481 683 482M644 489Q656 499 671 503M683 482Q696 486 707 494M707 494Q721 492 734 495M707 494Q689 499 671 503M368 520Q382 514 393 504M368 520Q370 525 372 529M393 504Q409 507 424 508M393 504Q399 522 410 537M393 504Q406 516 420 527M424 508Q435 508 445 509M424 508Q421 517 420 527M445 509Q460 507 476 506M445 509Q434 520 420 527M445 509Q447 524 455 537M517 521Q502 523 487 527M553 508Q564 517 576 524M576 524Q570 536 561 546M606 506Q624 507 639 516M606 506Q594 520 588 537M606 506Q610 520 616 534M639 516Q625 522 616 534M639 516Q648 531 654 547M639 516Q656 519 670 529M671 503Q677 512 686 520M686 520Q692 534 692 549M721 522Q720 534 716 545M721 522Q719 536 721 551M721 522Q735 539 743 560M353 529Q357 539 362 549M372 529Q366 539 362 549M372 529Q384 545 399 557M410 537Q405 547 399 557M410 537Q419 549 426 562M420 527Q438 528 455 537M420 527Q423 544 426 562M455 537Q451 544 451 552M455 537Q465 547 477 553M487 527Q479 539 477 553M503 540Q516 550 532 552M536 531Q550 536 561 546M536 531Q534 541 532 552M561 546Q574 542 588 537M588 537Q585 548 579 557M588 537Q591 546 597 554M616 534Q625 552 638 568M654 547Q673 544 692 549M654 547Q669 559 679 575M670 529Q683 536 692 549M705 529Q712 536 716 545M716 545Q704 548 692 549M346 570Q352 558 362 549M346 570Q349 571 352 573M362 549Q380 557 399 557M362 549Q371 569 381 589M399 557Q389 572 381 589M399 557Q401 565 403 573M426 562Q438 556 451 552M451 552Q441 566 430 580M477 553Q485 561 495 567M495 567Q515 562 532 552M495 567Q481 571 467 575M495 567Q504 581 516 590M532 552Q539 554 545 557M545 557Q555 575 565 593M579 557Q588 554 597 554M579 557Q591 565 601 575M597 554Q617 562 638 568M638 568Q643 564 649 561M638 568Q619 569 601 575M638 568Q636 574 636 579M692 549Q684 561 679 575M721 551Q732 556 743 560M721 551Q716 565 709 578M721 551Q728 563 734 575M743 560Q740 568 734 575M352 573Q360 588 369 601M381 589Q392 580 403 573M381 589Q374 594 369 601M403 573Q417 573 430 580M403 573Q398 590 401 608M430 580Q449 581 467 575M430 580Q417 596 401 608M430 580Q437 589 442 599M492 594Q504 592 516 590M516 590Q523 593 531 594M516 590Q510 595 505 601M516 590Q521 604 528 617M531 594Q530 606 528 617M531 594Q543 600 553 610M565 593Q557 600 553 610M601 575Q619 574 636 579M601 575Q586 582 574 595M626 593Q630 586 636 579M626 593Q629 599 635 605M626 593Q619 609 615 625M636 579Q657 576 679 575M679 575Q694 576 709 578M709 578Q713 586 717 595M369 601Q368 620 370 639M401 608Q407 609 413 612M413 612Q402 620 393 631M442 599Q459 599 476 596M442 599Q435 612 428 624M442 599Q449 617 447 636M476 596Q477 614 473 631M505 601Q517 607 528 617M505 601Q490 617 473 631M528 617Q525 620 521 622M528 617Q530 625 531 632M553 610Q544 622 531 632M553 610Q560 621 565 633M574 595Q569 614 565 633M635 605Q647 610 660 615M359 635Q363 643 368 649M393 631Q396 640 398 649M428 624Q437 631 447 636M428 624Q414 637 398 649M447 636Q464 647 474 664M473 631Q473 648 474 664M473 631Q482 648 497 661M521 622Q527 626 531 632M565 633Q583 630 599 622M599 622Q607 622 615 625M599 622Q588 634 580 649M599 622Q603 639 599 656M615 625Q624 634 636 639M615 625Q610 642 599 656M368 649Q383 647 398 649M474 664Q485 662 497 661M497 661Q513 662 529 661M529 661Q540 661 550 658M529 661Q526 669 522 677M580 649Q590 652 599 656M599 656Q610 662 623 663M623 663Q638 654 651 643M522 677Q504 685 491 699" fill="none" stroke="#f7e0a0" stroke-width="0.9" stroke-linecap="round"/>
<path d="M921 679Q932 678 942 675M921 679Q921 682 922 686M942 675Q948 683 954 692M995 675Q990 682 984 689M1037 677Q1041 686 1046 694M799 693Q804 692 809 692M809 692Q822 690 834 688M809 692Q802 693 795 696M809 692Q818 702 829 712M834 688Q841 687 849 686M834 688Q838 696 841 704M849 686Q844 695 841 704M849 686Q852 696 853 707M849 686Q857 693 866 697M866 689Q871 690 876 689M866 689Q866 693 866 697M876 689Q872 695 866 697M908 693Q916 691 922 686M908 693Q899 692 891 696M908 693Q912 695 915 699M908 693Q915 696 922 696M922 686Q931 689 940 689M922 686Q922 691 922 696M940 689Q947 690 954 692M940 689Q931 691 922 696M940 689Q944 696 948 702M954 692Q960 693 966 691M954 692Q950 697 948 702M954 692Q960 699 966 705M966 691Q965 698 966 705M984 689Q973 695 966 705M984 689Q985 699 986 710M984 689Q993 694 1002 698M984 689Q979 700 979 712M1008 683Q1019 685 1030 687M1008 683Q1007 691 1002 698M1008 683Q1011 692 1017 698M1030 687Q1038 690 1046 694M1030 687Q1029 695 1028 703M1046 694Q1050 706 1050 720M791 702Q789 710 786 718M841 704Q847 706 853 707M841 704Q835 708 829 712M841 704Q846 708 851 712M853 707Q861 704 866 697M866 697Q879 695 891 696M891 696Q882 707 869 714M891 696Q891 705 895 713M922 696Q934 702 948 702M922 696Q920 709 919 722M948 702Q957 703 966 705M948 702Q944 712 942 722M948 702Q954 711 961 719M966 705Q973 708 979 712M986 710Q994 703 1002 698M986 710Q983 711 979 712M986 710Q995 717 1006 722M1002 698Q1010 700 1017 698M1002 698Q1004 710 1006 722M1017 698Q1023 699 1028 703M1017 698Q1009 709 1006 722M1017 698Q1025 707 1029 719M1028 703Q1028 711 1029 719M1028 703Q1038 713 1050 720M503 723Q495 734 483 740M503 723Q498 732 491 740M503 723Q505 734 511 744M754 725Q767 722 780 716M754 725Q750 728 747 732M754 725Q757 731 761 736M780 716Q783 717 786 718M780 716Q771 726 761 736M786 718Q800 717 811 723M786 718Q789 723 790 729M811 723Q821 718 829 712M811 723Q808 725 806 727M811 723Q814 726 815 730M829 712Q820 719 815 730M851 712Q848 723 841 732M851 712Q851 724 854 736M869 714Q875 718 880 723M869 714Q882 713 895 713M869 714Q859 723 854 736M880 723Q889 719 895 713M880 723Q874 731 868 738M895 713Q907 719 919 722M895 713Q890 724 886 734M895 713Q899 723 906 730M919 722Q930 724 942 722M919 722Q913 726 906 730M919 722Q923 728 928 733M942 722Q952 719 961 719M942 722Q936 728 928 733M942 722Q944 727 944 733M961 719Q970 714 979 712M961 719Q952 725 944 733M961 719Q964 724 964 729M979 712Q983 716 986 719M979 712Q973 722 964 729M986 719Q996 723 1006 722M986 719Q976 726 964 729M986 719Q982 728 977 736M986 719Q993 728 1002 735M986 719Q986 731 991 743M1006 722Q1004 728 1002 735M1006 722Q1013 731 1023 736M1029 719Q1039 719 1050 720M1029 719Q1035 725 1041 730M483 740Q487 740 491 740M483 740Q482 749 482 757M491 740Q501 742 511 744M734 740Q742 737 747 732M734 740Q724 740 715 743M734 740Q738 745 739 750M747 732Q751 739 758 745M761 736Q775 730 790 729M761 736Q759 740 758 745M761 736Q764 742 770 745M790 729Q779 736 770 745M790 729Q797 742 798 757M790 729Q790 744 791 758M806 727Q813 734 817 744M815 730Q816 737 817 744M841 732Q847 735 854 736M841 732Q830 741 817 744M841 732Q842 743 846 754M854 736Q860 738 868 738M854 736Q857 743 862 749M868 738Q877 735 886 734M868 738Q864 743 862 749M868 738Q877 742 883 749M886 734Q896 734 906 730M886 734Q895 738 902 743M928 733Q916 740 902 743M928 733Q926 745 922 755M928 733Q930 741 932 749M944 733Q940 742 932 749M944 733Q950 742 958 749M964 729Q970 734 977 736M964 729Q961 739 958 749M964 729Q966 737 968 745M977 736Q984 740 991 743M1002 735Q996 738 991 743M1023 736Q1032 734 1041 730M1023 736Q1025 746 1030 755M1023 736Q1036 739 1047 749M482 757Q483 764 485 770M482 757Q487 765 492 772M511 744Q514 749 519 753M519 753Q518 762 517 770M519 753Q528 758 536 764M698 743Q706 741 715 743M715 743Q727 748 739 750M715 743Q707 754 696 763M715 743Q716 755 714 767M739 750Q749 749 758 745M739 750Q735 757 730 764M758 745Q764 744 770 745M758 745Q759 756 755 768M798 757Q808 751 817 744M798 757Q794 757 791 758M798 757Q799 764 803 769M798 757Q807 760 816 764M817 744Q821 750 822 757M822 757Q818 760 816 764M822 757Q827 759 831 761M846 754Q854 753 862 749M846 754Q838 756 831 761M846 754Q850 757 854 760M862 749Q868 760 870 772M883 749Q893 748 902 743M883 749Q876 760 870 772M902 743Q911 751 922 755M902 743Q899 755 892 766M902 743Q907 756 917 767M922 755Q926 752 932 749M932 749Q945 751 958 749M932 749Q933 759 935 768M932 749Q940 756 950 759M958 749Q955 754 950 759M958 749Q960 759 965 770M968 745Q965 757 965 770M968 745Q974 758 975 772M991 743Q1004 746 1015 755M991 743Q990 754 995 765M1015 755Q1022 754 1030 755M1015 755Q1014 760 1013 766M1030 755Q1038 752 1047 749M1030 755Q1021 760 1013 766M1030 755Q1034 757 1037 759M1047 749Q1043 754 1037 759M485 770Q488 772 492 772M485 770Q486 777 489 782M492 772Q490 777 489 782M492 772Q498 777 501 785M517 770Q526 765 536 764M517 770Q518 772 520 774M536 764Q546 768 556 771M556 771Q547 775 537 774M556 771Q554 778 554 785M571 770Q581 769 590 764M571 770Q562 777 554 785M571 770Q574 778 575 787M590 764Q604 768 619 765M590 764Q582 775 575 787M619 765Q609 771 598 774M619 765Q617 777 620 788M619 765Q620 777 624 787M672 772Q659 774 648 781M672 772Q673 775 674 777M672 772Q665 782 662 793M696 763Q705 766 714 767M696 763Q686 771 674 777M714 767Q710 774 706 781M714 767Q723 775 728 786M730 764Q734 770 740 775M755 768Q757 774 759 781M769 770Q779 761 791 758M769 770Q770 772 770 775M791 758Q798 763 803 769M791 758Q794 767 793 776M803 769Q798 771 793 776M803 769Q806 777 810 784M816 764Q812 774 810 784M816 764Q821 772 828 778M831 761Q829 769 828 778M854 760Q861 767 870 772M870 772Q881 769 892 766M870 772Q870 777 869 782M870 772Q881 779 890 788M892 766Q891 777 890 788M917 767Q926 769 935 768M917 767Q911 772 904 777M917 767Q914 777 913 787M935 768Q940 775 941 783M935 768Q943 774 953 778M935 768Q928 779 924 792M950 759Q958 764 965 770M950 759Q951 769 953 778M965 770Q970 770 975 772M965 770Q959 774 953 778M965 770Q970 776 976 782M965 770Q962 780 962 791M975 772Q984 767 995 765M975 772Q976 777 976 782M995 765Q992 774 992 783M995 765Q1005 769 1013 777M489 782Q495 784 501 785M489 782Q494 786 498 791M501 785Q510 779 520 774M501 785Q500 788 498 791M501 785Q508 788 514 790M520 774Q528 773 537 774M520 774Q518 782 514 790M520 774Q524 787 525 800M537 774Q546 778 554 785M537 774Q544 787 550 799M554 785Q564 787 575 787M554 785Q560 791 566 797M575 787Q578 791 581 795M598 774Q608 783 620 788M620 788Q622 788 624 787M620 788Q618 790 615 791M624 787Q636 786 648 781M624 787Q620 790 615 791M648 781Q647 790 644 799M648 781Q655 786 662 793M674 777Q667 785 662 793M674 777Q675 785 675 793M685 788Q695 783 706 781M685 788Q680 790 675 793M685 788Q692 791 698 795M685 788Q692 796 696 806M706 781Q703 788 698 795M728 786Q729 792 727 798M728 786Q738 797 751 803M740 775Q749 778 759 781M740 775Q745 790 751 803M759 781Q764 776 770 775M759 781Q760 788 765 795M770 775Q777 788 778 803M793 776Q801 782 810 784M793 776Q794 783 795 791M810 784Q819 782 828 778M810 784Q803 788 795 791M828 778Q838 778 848 780M828 778Q827 788 821 797M828 778Q835 785 841 794M848 780Q859 779 869 782M869 782Q864 786 860 791M869 782Q868 791 869 799M869 782Q876 790 885 794M890 788Q898 784 904 777M890 788Q902 789 913 787M890 788Q901 795 913 800M913 787Q918 790 924 792M941 783Q944 791 944 800M953 778Q957 785 962 791M976 782Q984 782 992 783M976 782Q968 785 962 791M976 782Q981 790 985 798M992 783Q1003 781 1013 777M992 783Q990 791 985 798M992 783Q999 794 1006 804M1013 777Q1018 782 1023 789M1051 787Q1051 791 1051 795M474 796Q486 793 498 791M474 796Q478 804 485 811M498 791Q506 789 514 790M498 791Q492 801 485 811M498 791Q502 801 503 811M514 790Q520 794 525 800M514 790Q507 800 503 811M514 790Q516 802 518 814M525 800Q538 801 550 799M525 800Q520 806 518 814M525 800Q534 808 545 813M550 799Q558 798 566 797M550 799Q549 806 545 813M550 799Q558 806 564 814M566 797Q574 796 581 795M566 797Q564 805 564 814M581 795Q595 797 607 802M581 795Q591 802 600 809M607 802Q612 797 615 791M607 802Q619 808 631 814M644 799Q653 796 662 793M644 799Q638 806 631 814M644 799Q649 808 656 815M662 793Q668 793 675 793M662 793Q657 803 656 815M662 793Q666 799 671 806M675 793Q672 799 671 806M675 793Q686 799 696 806M714 804Q720 800 727 798M714 804Q705 804 696 806M714 804Q721 810 724 819M727 798Q739 801 751 803M727 798Q729 807 732 815M751 803Q757 798 765 795M751 803Q742 810 732 815M751 803Q752 810 751 816M765 795Q771 798 778 803M765 795Q771 801 777 809M778 803Q787 797 795 791M778 803Q783 809 788 817M795 791Q807 797 821 797M795 791Q792 804 788 817M795 791Q804 803 811 817M821 797Q831 797 841 794M821 797Q818 808 811 817M821 797Q823 804 827 810M841 794Q850 790 860 791M841 794Q835 803 827 810M860 791Q865 795 869 799M860 791Q863 802 865 813M869 799Q877 795 885 794M869 799Q867 806 865 813M869 799Q876 809 886 816M885 794Q887 805 886 816M913 800Q919 796 924 792M913 800Q911 806 907 811M924 792Q922 803 924 815M944 800Q952 795 962 791M944 800Q933 807 924 815M944 800Q944 809 942 817M944 800Q952 809 960 818M962 791Q974 793 985 798M962 791Q968 805 980 815M985 798Q984 807 980 815M985 798Q986 807 991 816M1006 804Q1000 811 991 816M1006 804Q1010 807 1013 811M1024 796Q1018 803 1013 811M1024 796Q1026 801 1026 807M1040 794Q1046 795 1051 795M1040 794Q1033 800 1026 807M1051 795Q1049 808 1048 820M457 819Q462 815 465 811M457 819Q471 813 485 811M485 811Q494 810 503 811M503 811Q510 813 518 814M518 814Q532 812 545 813M545 813Q554 814 564 814M545 813Q558 817 572 817M564 814Q568 815 572 817M572 817Q586 814 600 809M605 813Q618 815 631 814M631 814Q644 816 656 815M656 815Q663 810 671 806M656 815Q671 813 685 817M671 806Q679 811 685 817M671 806Q684 806 696 806M724 819Q728 816 732 815M751 816Q765 814 777 809M777 809Q783 812 788 817M788 817Q800 816 811 817M811 817Q820 815 827 810M827 810Q841 811 854 815M854 815Q859 815 865 813M865 813Q875 817 886 816M886 816Q897 814 907 811M907 811Q915 813 924 815M924 815Q933 814 942 817M942 817Q951 818 960 818M960 818Q970 816 980 815M991 816Q1002 814 1013 811" fill="none" stroke="#f8d478" stroke-width="1.3" stroke-linecap="round"/>
<path d="M354 381Q356 379 358 378M354 381Q357 384 360 387M354 381Q360 389 361 398M358 378Q365 376 373 376M358 378Q358 383 360 387M358 378Q364 382 370 387M373 376Q380 378 388 379M373 376Q372 381 370 387M388 379Q390 380 392 383M388 379Q395 383 403 384M388 379Q384 385 383 393M392 383Q397 382 403 384M392 383Q386 387 383 393M392 383Q397 387 401 391M370 387Q376 390 383 393M370 387Q366 392 361 398M383 393Q378 396 373 398M383 393Q386 395 389 398M383 393Q387 394 391 395M392 392Q397 392 401 391M392 392Q391 393 391 395M401 391Q396 393 391 395M361 398Q367 397 373 398M361 398Q360 404 357 410M361 398Q363 402 365 405M373 398Q381 400 389 398M373 398Q369 402 365 405M373 398Q377 405 377 412M389 398Q389 404 388 409M389 398Q393 402 399 405M391 395Q395 399 399 405M357 410Q361 408 365 405M357 410Q362 416 366 422M365 405Q371 409 377 412M377 412Q382 410 388 409M377 412Q371 416 366 422M377 412Q376 418 372 423M388 409Q394 408 399 405M388 409Q388 414 388 419M388 409Q393 414 399 418M366 422Q369 422 372 423M366 422Q365 424 365 426M372 423Q369 424 365 426M388 419Q387 422 386 426M399 418Q392 422 386 426M405 416Q405 424 404 432M360 423Q363 424 365 426M360 423Q359 429 358 434M365 426Q372 425 378 425M365 426Q371 432 376 440M378 425Q382 425 386 426M386 426Q386 432 388 438M404 432Q399 435 394 438M388 438Q389 444 389 451M394 438Q392 445 392 453M369 450Q374 447 379 444M369 450Q371 452 373 455M379 444Q381 450 384 454M389 451Q390 452 392 453M404 443Q398 449 392 453M363 453Q368 454 373 455M363 453Q356 458 352 466M363 453Q365 461 363 468M373 455Q379 454 384 454M373 455Q373 461 375 468M384 454Q388 453 392 453M384 454Q380 461 375 468M392 453Q396 457 399 462M352 466Q358 466 363 468M363 468Q358 473 351 476M375 468Q375 472 374 476M387 468Q381 473 374 476M387 468Q387 474 386 480M387 468Q390 473 393 477M399 462Q396 469 393 477M351 476Q359 475 366 472M366 472Q370 474 374 476M374 476Q368 481 364 488M374 476Q377 480 381 485M386 480Q390 479 393 477M386 480Q384 482 381 485M386 480Q388 480 391 481M393 477Q392 479 391 481M393 477Q394 486 394 494M353 481Q351 488 347 494M364 488Q372 485 381 485M364 488Q363 493 360 496M364 488Q369 493 376 497M381 485Q386 483 391 481M381 485Q380 491 376 497M391 481Q387 487 384 492M347 494Q348 500 349 507M347 494Q347 502 345 509M360 496Q368 495 376 497M360 496Q354 502 349 507M360 496Q359 502 358 507M360 496Q365 502 369 507M376 497Q380 494 384 492M384 492Q389 494 394 494M394 494Q391 502 387 508M349 507Q347 508 345 509M349 507Q349 509 349 512M358 507Q363 507 369 507M358 507Q353 508 349 512M369 507Q375 506 380 506M369 507Q365 508 361 510M369 507Q371 509 373 510M380 506Q384 506 387 508M387 508Q384 513 382 518M387 508Q388 516 387 524M373 510Q377 514 382 518M373 510Q367 516 361 522M373 510Q376 517 375 525M382 518Q378 521 375 525M382 518Q384 521 387 524M333 525Q340 523 347 521M347 521Q354 520 361 522M347 521Q344 528 339 534M361 522Q356 527 349 530M361 522Q360 526 361 531M365 526Q370 525 375 525M365 526Q363 529 361 531M365 526Q367 532 370 537M375 525Q381 523 387 524M375 525Q374 532 370 537M387 524Q383 530 380 536M333 533Q334 537 336 540M339 534Q345 533 349 530M339 534Q346 537 353 541M349 530Q352 535 353 541M361 531Q366 534 370 537M361 531Q357 536 353 541M361 531Q364 538 367 546M370 537Q375 537 380 536M370 537Q374 539 377 539M336 540Q339 542 341 543M336 540Q339 545 340 549M341 543Q340 546 340 549M367 546Q367 551 366 556M367 546Q368 549 369 553M377 539Q372 546 369 553M377 539Q380 547 380 556M326 551Q333 549 340 549M326 551Q332 555 336 561M340 549Q339 556 336 561M340 549Q345 554 348 560M354 555Q351 557 348 560M354 555Q354 558 354 560M366 556Q367 554 369 553M366 556Q366 559 366 563M369 553Q374 555 380 556M380 556Q372 558 366 563M380 556Q381 557 382 558M336 561Q342 561 348 560M348 560Q350 566 353 573M354 560Q360 561 366 563M354 560Q356 564 359 567M353 573Q355 569 359 567M353 573Q356 576 358 581M359 567Q359 574 358 581M359 567Q363 575 364 584" fill="none" stroke="#f7d88a" stroke-width="0.9" stroke-linecap="round"/>
<path d="M870 346Q866 350 862 353M870 346Q874 348 877 352M870 346Q869 353 866 360M851 355Q856 354 862 353M851 355Q851 356 852 358M851 355Q846 359 842 365M862 353Q859 356 857 360M862 353Q865 356 866 360M877 352Q879 353 880 354M877 352Q871 355 866 360M877 352Q878 355 879 359M880 354Q880 356 879 359M857 360Q862 359 866 360M857 360Q857 363 856 365M857 360Q861 363 864 367M866 360Q866 364 864 367M866 360Q870 363 872 367M879 359Q875 363 872 367M856 365Q853 371 851 377M864 367Q857 372 851 377M827 380Q824 383 819 386M827 380Q831 382 834 384M842 377Q838 380 834 384M819 386Q827 384 834 384M819 386Q819 389 818 392M806 391Q810 395 811 399M818 392Q814 396 811 399M801 401Q802 405 801 410M801 401Q804 405 808 409" fill="none" stroke="#f7d88a" stroke-width="0.9" stroke-linecap="round"/>
<path d="M571 438Q575 439 579 441M571 438Q565 443 558 446M571 438Q572 444 575 449M579 441Q581 443 583 444M588 435Q595 436 601 440M601 440Q597 444 594 449M601 440Q604 443 605 447M558 446Q560 450 560 454M566 446Q564 450 560 454M566 446Q567 451 566 455M575 449Q578 446 583 444M575 449Q571 452 566 455M583 444Q583 449 582 454M583 444Q584 448 586 453M594 449Q600 449 605 447M594 449Q590 451 586 453M594 449Q595 452 595 454M560 454Q561 458 562 463M566 455Q564 459 562 463M566 455Q572 460 576 465M582 454Q580 460 576 465M586 453Q590 454 595 454M586 453Q583 457 582 462M595 454Q589 458 582 462M562 463Q569 464 576 465M576 465Q579 463 582 462M582 462Q589 465 596 467" fill="none" stroke="#f7d88a" stroke-width="0.9" stroke-linecap="round"/>
<path d="M681 280Q674 284 668 289M681 280Q678 284 673 289M681 280Q678 286 674 291M600 284Q604 287 607 289M600 284Q608 286 616 287M616 287Q617 290 618 292M616 287Q624 293 633 294M668 289Q671 288 673 289M668 289Q664 293 658 296M668 289Q666 295 662 301M607 299Q612 296 618 292M618 292Q626 292 633 294M628 298Q630 296 633 294M633 294Q639 294 644 291M633 294Q638 300 645 303M644 291Q651 293 658 296M644 291Q643 297 645 303M658 296Q652 301 645 303M632 303Q639 303 645 303M645 303Q653 303 662 301" fill="none" stroke="#f7d88a" stroke-width="0.9" stroke-linecap="round"/>
<path d="M747 473Q744 477 741 481M734 479Q737 480 741 481M734 479Q734 485 737 491M741 481Q738 486 737 491M741 481Q741 488 744 495M737 491Q741 493 744 495M737 491Q739 496 742 501M744 495Q742 497 742 501M742 501Q741 505 737 509M737 509Q737 515 739 521M739 521Q735 526 733 532M733 532Q736 538 738 545M745 540Q741 543 738 545M745 540Q747 548 751 555M738 545Q742 547 746 546M746 546Q748 551 751 555M735 555Q736 559 738 562M735 555Q743 557 751 555M735 555Q734 560 734 566M738 562Q734 569 729 577M723 571Q723 576 722 582M722 582Q726 580 729 577M722 582Q718 582 713 583M729 577Q726 580 721 583M707 589Q709 585 713 583M707 589Q704 594 701 598M707 589Q708 595 711 600M713 583Q717 582 721 583M713 583Q713 592 711 600M701 598Q706 599 711 600" fill="none" stroke="#f7d88a" stroke-width="0.9" stroke-linecap="round"/>
<path d="M383 264Q388 266 394 269M383 264Q384 270 383 275M394 269Q389 273 383 275M394 269Q394 278 393 288M354 277Q362 275 368 270M368 270Q366 275 365 280M379 272Q381 274 383 275M379 272Q373 277 365 280M383 275Q387 283 393 288M355 285Q360 284 365 280M355 285Q349 290 342 295M355 285Q355 289 354 292M355 285Q362 288 367 293M365 280Q365 287 367 293M376 286Q384 288 393 288M342 295Q348 293 354 292M342 295Q337 301 333 308M342 295Q348 302 355 309M354 292Q360 291 367 293M354 292Q355 300 355 309M367 293Q369 298 374 302M379 294Q383 295 386 296M379 294Q376 298 374 302M386 296Q384 299 381 302M394 291Q396 301 396 310M333 308Q337 307 340 305M355 309Q351 311 346 312M355 309Q358 310 360 312M355 309Q354 315 356 322M374 302Q377 301 381 302M374 302Q368 308 360 312M374 302Q371 311 371 321M381 302Q389 304 396 310M396 310Q392 316 385 320M346 312Q351 317 356 322M360 312Q366 316 371 321M371 321Q378 321 385 320M371 321Q363 323 356 322M371 321Q367 324 364 327M371 321Q370 329 373 336M385 320Q383 326 381 331M385 320Q383 327 382 334M343 326Q349 324 356 322M343 326Q348 330 354 332M364 327Q359 330 354 332M381 331Q382 333 382 334M354 332Q356 335 358 336M354 332Q351 340 347 347M358 336Q365 335 373 336M358 336Q352 341 347 347M373 336Q377 334 382 334" fill="none" stroke="#f7d88a" stroke-width="0.9" stroke-linecap="round"/>
<path d="M582.6 459.6C582.7 447.1 583.0 403.6 583.0 384.2C583.0 364.8 577.0 353.6 582.6 343.2C588.2 332.7 608.9 326.8 616.7 321.5C624.5 316.3 622.1 318.2 629.5 311.6C636.8 305.1 654.2 287.4 660.9 282.3C667.5 277.2 665.6 282.9 669.5 281.1C673.4 279.3 678.5 275.6 684.1 271.7C689.7 267.8 696.4 272.1 703.2 257.9C709.9 243.6 721.0 198.0 724.6 186.0M582.6 459.6C586.6 457.5 597.1 454.6 606.7 447.0C616.3 439.5 628.8 421.8 640.4 414.5C652.0 407.3 664.6 408.5 676.3 403.6C688.1 398.8 693.8 388.1 710.9 385.4C728.1 382.7 756.1 384.6 779.2 387.2C802.3 389.9 838.0 398.9 849.7 401.2M582.6 459.6C587.8 463.7 603.2 475.2 614.0 484.1C624.8 493.0 632.7 507.9 647.2 513.1C661.7 518.2 686.5 514.3 700.9 514.8C715.3 515.3 728.2 515.8 733.7 516.0M582.6 459.6C584.1 464.2 589.2 473.0 591.7 487.0C594.2 501.0 599.7 525.5 597.6 543.6C595.5 561.8 589.6 585.2 578.9 596.0C568.2 606.9 550.1 601.9 533.4 608.7C516.7 615.5 489.1 625.5 478.8 636.9C468.5 648.2 473.9 668.6 471.5 676.8C469.2 685.0 465.8 684.3 464.7 685.9M582.6 459.6C574.0 464.2 545.1 481.8 531.2 487.0C517.2 492.3 506.8 486.3 498.8 491.2C490.9 496.1 489.4 507.1 483.4 516.6C477.3 526.1 470.7 542.6 462.4 548.3C454.2 554.0 440.0 550.3 433.8 550.7C427.5 551.0 432.2 547.6 425.1 550.7C418.0 553.7 404.1 565.2 391.0 568.7C377.9 572.2 355.7 573.1 346.4 571.7C337.0 570.2 336.9 561.9 335.0 560.0M582.6 459.6 L563.5 427.8M582.6 459.6C575.0 457.2 551.9 450.8 537.1 445.2C522.2 439.7 500.7 429.7 493.4 426.6M582.6 459.6C572.7 448.8 538.4 410.5 523.4 394.5C508.4 378.6 500.4 373.8 492.5 364.0C484.5 354.2 482.5 341.4 475.6 335.8C468.7 330.1 462.5 335.9 451.1 330.2C439.6 324.5 420.7 310.2 406.9 301.7C393.1 293.2 374.7 283.0 368.2 279.2M493.4 268.5C491.9 270.4 484.0 270.1 484.7 279.8C485.4 289.6 496.2 313.1 497.5 327.1C498.8 341.1 493.8 352.8 492.5 364.0C491.1 375.3 489.1 384.1 489.3 394.5C489.4 405.0 493.5 415.5 493.4 426.6C493.3 437.8 492.1 452.0 488.8 461.4C485.6 470.8 478.4 473.8 473.8 482.9C469.2 492.0 463.0 505.1 461.1 516.0C459.2 526.9 462.8 538.1 462.4 548.3C462.1 558.6 456.1 562.7 458.8 577.5C461.5 592.2 475.5 627.0 478.8 636.9M669.5 281.1C668.1 281.3 669.5 281.5 660.9 282.3C652.2 283.2 631.5 287.5 617.6 286.1C603.7 284.6 586.1 274.5 577.6 273.6C569.1 272.6 582.1 279.4 566.7 280.5C551.2 281.5 507.4 281.7 484.7 279.8C462.1 278.0 450.0 269.3 430.6 269.2C411.2 269.1 378.6 277.5 368.2 279.2M368.2 279.2C367.2 284.3 364.1 300.0 362.3 309.8C360.6 319.5 359.1 331.0 357.8 337.6C356.4 344.2 354.1 345.2 354.1 349.3C354.1 353.4 355.6 355.2 357.8 362.2C360.0 369.2 367.1 382.6 367.3 391.5C367.5 400.4 360.8 406.6 359.1 415.7C357.5 424.9 355.9 437.0 357.3 446.4C358.7 455.9 368.5 463.2 367.3 472.2C366.1 481.1 351.9 490.5 350.0 500.1C348.1 509.6 358.4 519.6 355.9 529.6C353.4 539.5 338.5 554.9 335.0 560.0M354.1 349.3C360.6 348.3 383.5 340.1 393.3 343.2C403.0 346.2 395.8 364.2 412.4 367.7C428.9 371.2 479.1 364.6 492.5 364.0M582.6 343.2C576.3 346.5 552.5 356.4 544.8 363.4C537.1 370.5 539.7 380.2 536.2 385.4C532.6 390.6 530.5 387.7 523.4 394.5C516.3 401.4 505.0 417.6 493.4 426.6C481.8 435.7 462.7 445.2 453.8 448.8C444.9 452.5 445.7 447.6 440.1 448.2C434.5 448.8 428.3 452.9 420.1 452.4C411.9 451.9 401.4 446.2 391.0 445.2C380.5 444.3 362.9 446.2 357.3 446.4M582.6 343.2 L497.5 327.1M544.8 363.4 L492.5 364.0M617.6 286.1C617.5 292.0 613.1 313.4 616.7 321.5C620.4 329.7 629.3 328.7 639.5 335.1C649.6 341.6 665.8 352.0 677.7 360.4C689.6 368.7 705.4 381.2 710.9 385.4M629.5 311.6C637.3 311.9 668.3 305.4 676.3 313.5C684.4 321.6 677.5 352.5 677.7 360.4M676.3 313.5 L660.9 282.3M710.9 385.4C714.5 380.4 728.4 364.3 732.3 355.4C736.3 346.6 735.6 336.5 734.6 332.1C733.5 327.6 727.4 329.5 725.9 329.0M732.3 355.4 L779.2 387.2M710.9 385.4C709.2 398.6 695.8 444.7 700.5 464.4C705.1 484.1 732.3 497.1 738.7 503.6M881.6 338.2C881.2 342.7 884.6 354.8 879.3 365.3C874.0 375.8 861.6 392.5 849.7 401.2C837.8 409.9 820.4 411.7 807.9 417.6C795.3 423.4 784.4 425.0 774.6 436.2C764.9 447.5 755.1 474.0 749.2 485.2C743.2 496.5 741.3 498.5 738.7 503.6C736.1 508.7 733.0 509.1 733.7 516.0C734.4 523.0 740.9 536.3 742.8 545.4C744.7 554.5 747.3 564.5 745.1 570.5C742.8 576.5 736.7 576.2 729.1 581.5C721.5 586.8 708.8 595.8 699.5 602.4C690.3 608.9 686.0 616.0 673.6 620.8C661.2 625.6 635.8 627.6 624.9 631.1C614.0 634.7 614.4 639.1 608.1 642.0C601.8 645.0 597.9 646.2 587.1 648.9C576.4 651.6 561.5 660.0 543.4 658.0C525.4 656.0 496.9 639.2 478.8 636.9C460.7 634.6 445.4 642.6 434.7 644.3C423.9 646.0 421.6 644.9 414.2 647.2C406.8 649.5 396.5 656.9 390.1 658.0C383.6 659.2 381.1 654.8 375.5 654.0C369.9 653.3 359.6 653.5 356.4 653.5M699.5 602.4 L705.9 624.3M673.6 620.8C667.8 628.7 652.8 659.5 639.0 668.3C625.2 677.0 605.6 672.2 590.8 673.4C575.9 674.5 560.1 672.8 549.8 675.1C539.5 677.4 536.7 681.4 528.9 687.0C521.1 692.6 513.6 708.6 502.9 708.5C492.2 708.3 471.1 689.6 464.7 685.9M587.1 648.9 L590.8 673.4M578.9 596.0C578.9 599.2 577.1 606.2 578.5 615.1C579.8 623.9 585.7 643.2 587.1 648.9M549.8 675.1C548.7 672.2 546.2 669.1 543.4 658.0C540.7 647.0 535.1 616.9 533.4 608.7M647.2 513.1C650.4 518.3 657.4 537.9 666.3 544.2C675.3 550.6 690.4 545.0 700.9 551.2C711.4 557.5 724.4 576.5 729.1 581.5M666.3 544.2C667.5 548.9 668.1 562.5 673.6 572.2C679.1 581.9 695.2 597.3 699.5 602.4M591.7 487.0 L666.3 544.2M568.0 493.0 L582.6 459.6M568.0 493.0C568.7 501.5 572.8 532.8 572.1 544.2C571.4 555.7 565.3 558.8 563.9 561.7M597.6 543.6 L572.1 544.2M849.7 401.2C847.2 397.8 846.0 382.9 834.3 380.5C822.5 378.2 788.4 386.1 779.2 387.2M849.7 401.2 L853.4 368.3M807.9 417.6C806.8 417.3 806.3 420.8 801.5 415.7C796.7 410.7 782.9 392.0 779.2 387.2M733.7 516.0 L700.9 551.2M335.0 560.0 L355.9 529.6M335.0 560.0C336.9 561.9 342.1 566.4 346.4 571.7C350.7 576.9 356.1 577.7 360.9 591.4C365.8 605.1 373.1 643.6 375.5 654.0M360.9 591.4 L393.3 600.6M359.1 415.7C365.6 414.2 384.2 413.3 398.3 406.7C412.3 400.0 435.8 380.8 443.3 375.6M411.0 379.9C408.9 384.4 401.6 395.8 398.3 406.7C394.9 417.6 396.1 434.3 391.0 445.2C385.8 456.2 371.3 467.7 367.3 472.2M367.3 391.5C374.6 389.6 403.5 383.9 411.0 379.9C418.5 376.0 412.1 369.7 412.4 367.7M724.6 186.0C727.1 189.1 730.5 197.8 739.6 204.6C748.7 211.4 767.1 221.3 779.2 226.9C791.3 232.5 806.2 232.0 812.4 238.3C818.6 244.6 808.9 256.3 816.5 264.8C824.1 273.3 846.1 284.8 857.9 289.2C869.8 293.6 882.6 290.8 887.5 291.1M883.0 320.9C883.7 316.0 885.1 297.7 887.5 291.1C889.9 284.4 890.8 285.6 897.5 281.1C904.2 276.6 918.9 269.4 927.6 264.2C936.2 258.9 942.3 255.2 949.4 249.7C956.5 244.1 966.9 238.3 969.9 230.7C972.8 223.1 966.5 212.4 967.1 204.0C967.8 195.6 972.5 184.2 973.5 180.2M881.6 338.2 L883.0 320.9M949.4 249.7C952.8 248.5 961.6 239.5 969.9 242.7C978.1 246.0 994.8 262.4 999.0 269.2C1003.3 276.0 991.7 279.3 995.4 283.6C999.0 287.9 1016.6 293.0 1020.9 294.8M969.9 230.7 L969.9 242.7M999.0 269.2C1001.5 266.0 1010.3 257.2 1014.0 250.3C1017.7 243.4 1019.0 235.2 1021.3 227.5C1023.6 219.8 1026.6 207.9 1027.7 204.0M684.1 271.7C692.4 273.7 722.4 280.9 734.1 283.6C745.9 286.3 746.3 286.0 754.6 288.0C762.9 289.9 773.4 299.3 783.7 295.4C794.1 291.6 811.0 269.9 816.5 264.8M739.6 204.6 L734.1 283.6M724.6 186.0C725.2 196.1 726.6 230.3 728.2 246.5C729.8 262.8 733.1 277.4 734.1 283.6M816.5 264.8C815.8 260.4 812.4 247.3 812.4 238.3C812.4 229.3 815.1 223.1 816.5 211.0C817.9 198.8 822.0 180.3 820.6 165.4C819.2 150.6 810.4 129.2 808.3 121.9M724.6 186.0C734.4 182.4 767.7 167.6 783.7 164.1C799.7 160.7 802.7 171.9 820.6 165.4C838.5 158.9 879.4 131.9 891.1 125.2M897.5 281.1C896.5 273.1 889.0 245.7 891.1 233.2C893.3 220.8 910.3 224.5 910.3 206.5C910.3 188.5 894.3 138.7 891.1 125.2M816.5 264.8C821.9 261.3 840.2 251.9 848.8 244.0C857.4 236.1 860.9 219.1 867.9 217.3C875.0 215.6 887.3 230.6 891.1 233.2M816.5 264.8 L824.2 304.8M816.5 264.8 L777.8 261.6M724.6 186.0 L697.7 197.6M724.6 186.0 L772.8 185.4M927.6 264.2 L936.7 231.3M949.4 249.7C947.3 246.6 940.3 244.1 936.7 231.3C933.0 218.6 929.1 182.9 927.6 173.2M487.0 728.7C484.4 734.1 477.0 747.1 471.1 761.1C465.2 775.1 456.7 801.8 451.5 812.6C446.3 823.4 441.6 823.6 439.7 825.8M487.0 728.7C490.3 730.6 502.6 734.3 506.6 739.9C510.6 745.5 512.7 755.1 511.1 762.2C509.5 769.4 495.0 772.3 497.0 782.8C499.1 793.3 519.0 818.2 523.4 825.3M439.7 825.8C449.5 827.0 484.4 833.0 498.4 832.9C512.3 832.8 511.7 828.2 523.4 825.3C535.1 822.3 556.0 817.2 568.5 815.4C581.0 813.5 582.6 818.6 598.5 814.3C614.4 809.9 651.8 795.1 664.0 789.4C676.3 783.7 667.8 781.9 672.2 780.0C676.7 778.2 682.6 781.5 690.9 778.3C699.2 775.2 717.1 768.7 722.3 761.1C727.5 753.5 722.3 737.4 722.3 732.6M506.6 739.9C517.5 742.9 553.6 754.0 572.1 757.8C590.6 761.5 605.4 759.2 617.6 762.2C629.8 765.3 637.6 771.6 645.4 776.1C653.1 780.7 660.9 787.2 664.0 789.4M471.1 761.1C473.0 762.9 478.1 768.1 482.5 771.7C486.8 775.3 494.6 780.9 497.0 782.8M722.3 732.6C727.8 730.5 746.0 720.1 755.1 719.7C764.1 719.3 767.1 732.6 776.5 730.4C785.9 728.1 794.3 713.1 811.5 706.2C828.7 699.3 866.6 694.7 879.8 689.3C892.9 683.8 881.0 675.6 890.2 673.4C899.5 671.1 920.0 675.7 935.3 675.7C950.6 675.7 969.1 674.4 982.2 673.4C995.2 672.3 1002.0 665.8 1013.6 669.4C1025.2 673.0 1045.4 690.7 1051.8 694.9M890.2 673.4C896.6 677.0 915.6 688.5 928.5 694.9C941.4 701.3 956.1 710.1 967.6 711.8C979.1 713.5 983.2 707.9 997.2 705.1C1011.2 702.3 1042.7 696.6 1051.8 694.9M997.2 705.1C1002.9 711.0 1029.3 728.0 1031.8 740.5C1034.2 752.9 1015.1 773.4 1011.7 780.0M967.6 711.8C965.9 715.3 962.0 724.6 957.6 732.6C953.2 740.6 950.9 750.4 941.2 760.0C931.5 769.6 906.3 785.0 899.3 790.0M876.1 701.1 L899.3 790.0M879.8 689.3 L876.1 701.1M776.5 730.4 L811.0 751.1M757.3 749.4 L757.8 781.1M722.3 732.6C728.1 735.4 742.6 746.3 757.3 749.4C772.1 752.5 802.1 750.8 811.0 751.1M722.3 761.1 L757.8 781.1M997.2 705.1 L982.2 673.4M957.6 732.6 L1031.8 740.5M941.2 760.0 L1011.7 780.0M617.6 762.2 L598.5 814.3M811.0 751.1 L899.3 790.0M811.5 706.2 L811.0 751.1M928.5 694.9 L957.6 732.6" fill="none" stroke="#f2b33a" stroke-width="1.7" stroke-linecap="round" stroke-linejoin="round" opacity="0.5"/>
<path d="M582.6 459.6C582.7 447.1 583.0 403.6 583.0 384.2C583.0 364.8 577.0 353.6 582.6 343.2C588.2 332.7 608.9 326.8 616.7 321.5C624.5 316.3 622.1 318.2 629.5 311.6C636.8 305.1 654.2 287.4 660.9 282.3C667.5 277.2 665.6 282.9 669.5 281.1C673.4 279.3 678.5 275.6 684.1 271.7C689.7 267.8 696.4 272.1 703.2 257.9C709.9 243.6 721.0 198.0 724.6 186.0M582.6 459.6C586.6 457.5 597.1 454.6 606.7 447.0C616.3 439.5 628.8 421.8 640.4 414.5C652.0 407.3 664.6 408.5 676.3 403.6C688.1 398.8 693.8 388.1 710.9 385.4C728.1 382.7 756.1 384.6 779.2 387.2C802.3 389.9 838.0 398.9 849.7 401.2M582.6 459.6C587.8 463.7 603.2 475.2 614.0 484.1C624.8 493.0 632.7 507.9 647.2 513.1C661.7 518.2 686.5 514.3 700.9 514.8C715.3 515.3 728.2 515.8 733.7 516.0M582.6 459.6C584.1 464.2 589.2 473.0 591.7 487.0C594.2 501.0 599.7 525.5 597.6 543.6C595.5 561.8 589.6 585.2 578.9 596.0C568.2 606.9 550.1 601.9 533.4 608.7C516.7 615.5 489.1 625.5 478.8 636.9C468.5 648.2 473.9 668.6 471.5 676.8C469.2 685.0 465.8 684.3 464.7 685.9M582.6 459.6C574.0 464.2 545.1 481.8 531.2 487.0C517.2 492.3 506.8 486.3 498.8 491.2C490.9 496.1 489.4 507.1 483.4 516.6C477.3 526.1 470.7 542.6 462.4 548.3C454.2 554.0 440.0 550.3 433.8 550.7C427.5 551.0 432.2 547.6 425.1 550.7C418.0 553.7 404.1 565.2 391.0 568.7C377.9 572.2 355.7 573.1 346.4 571.7C337.0 570.2 336.9 561.9 335.0 560.0M582.6 459.6 L563.5 427.8M582.6 459.6C575.0 457.2 551.9 450.8 537.1 445.2C522.2 439.7 500.7 429.7 493.4 426.6M582.6 459.6C572.7 448.8 538.4 410.5 523.4 394.5C508.4 378.6 500.4 373.8 492.5 364.0C484.5 354.2 482.5 341.4 475.6 335.8C468.7 330.1 462.5 335.9 451.1 330.2C439.6 324.5 420.7 310.2 406.9 301.7C393.1 293.2 374.7 283.0 368.2 279.2M493.4 268.5C491.9 270.4 484.0 270.1 484.7 279.8C485.4 289.6 496.2 313.1 497.5 327.1C498.8 341.1 493.8 352.8 492.5 364.0C491.1 375.3 489.1 384.1 489.3 394.5C489.4 405.0 493.5 415.5 493.4 426.6C493.3 437.8 492.1 452.0 488.8 461.4C485.6 470.8 478.4 473.8 473.8 482.9C469.2 492.0 463.0 505.1 461.1 516.0C459.2 526.9 462.8 538.1 462.4 548.3C462.1 558.6 456.1 562.7 458.8 577.5C461.5 592.2 475.5 627.0 478.8 636.9M669.5 281.1C668.1 281.3 669.5 281.5 660.9 282.3C652.2 283.2 631.5 287.5 617.6 286.1C603.7 284.6 586.1 274.5 577.6 273.6C569.1 272.6 582.1 279.4 566.7 280.5C551.2 281.5 507.4 281.7 484.7 279.8C462.1 278.0 450.0 269.3 430.6 269.2C411.2 269.1 378.6 277.5 368.2 279.2M368.2 279.2C367.2 284.3 364.1 300.0 362.3 309.8C360.6 319.5 359.1 331.0 357.8 337.6C356.4 344.2 354.1 345.2 354.1 349.3C354.1 353.4 355.6 355.2 357.8 362.2C360.0 369.2 367.1 382.6 367.3 391.5C367.5 400.4 360.8 406.6 359.1 415.7C357.5 424.9 355.9 437.0 357.3 446.4C358.7 455.9 368.5 463.2 367.3 472.2C366.1 481.1 351.9 490.5 350.0 500.1C348.1 509.6 358.4 519.6 355.9 529.6C353.4 539.5 338.5 554.9 335.0 560.0M354.1 349.3C360.6 348.3 383.5 340.1 393.3 343.2C403.0 346.2 395.8 364.2 412.4 367.7C428.9 371.2 479.1 364.6 492.5 364.0M582.6 343.2C576.3 346.5 552.5 356.4 544.8 363.4C537.1 370.5 539.7 380.2 536.2 385.4C532.6 390.6 530.5 387.7 523.4 394.5C516.3 401.4 505.0 417.6 493.4 426.6C481.8 435.7 462.7 445.2 453.8 448.8C444.9 452.5 445.7 447.6 440.1 448.2C434.5 448.8 428.3 452.9 420.1 452.4C411.9 451.9 401.4 446.2 391.0 445.2C380.5 444.3 362.9 446.2 357.3 446.4M582.6 343.2 L497.5 327.1M544.8 363.4 L492.5 364.0M617.6 286.1C617.5 292.0 613.1 313.4 616.7 321.5C620.4 329.7 629.3 328.7 639.5 335.1C649.6 341.6 665.8 352.0 677.7 360.4C689.6 368.7 705.4 381.2 710.9 385.4M629.5 311.6C637.3 311.9 668.3 305.4 676.3 313.5C684.4 321.6 677.5 352.5 677.7 360.4M676.3 313.5 L660.9 282.3M710.9 385.4C714.5 380.4 728.4 364.3 732.3 355.4C736.3 346.6 735.6 336.5 734.6 332.1C733.5 327.6 727.4 329.5 725.9 329.0M732.3 355.4 L779.2 387.2M710.9 385.4C709.2 398.6 695.8 444.7 700.5 464.4C705.1 484.1 732.3 497.1 738.7 503.6M881.6 338.2C881.2 342.7 884.6 354.8 879.3 365.3C874.0 375.8 861.6 392.5 849.7 401.2C837.8 409.9 820.4 411.7 807.9 417.6C795.3 423.4 784.4 425.0 774.6 436.2C764.9 447.5 755.1 474.0 749.2 485.2C743.2 496.5 741.3 498.5 738.7 503.6C736.1 508.7 733.0 509.1 733.7 516.0C734.4 523.0 740.9 536.3 742.8 545.4C744.7 554.5 747.3 564.5 745.1 570.5C742.8 576.5 736.7 576.2 729.1 581.5C721.5 586.8 708.8 595.8 699.5 602.4C690.3 608.9 686.0 616.0 673.6 620.8C661.2 625.6 635.8 627.6 624.9 631.1C614.0 634.7 614.4 639.1 608.1 642.0C601.8 645.0 597.9 646.2 587.1 648.9C576.4 651.6 561.5 660.0 543.4 658.0C525.4 656.0 496.9 639.2 478.8 636.9C460.7 634.6 445.4 642.6 434.7 644.3C423.9 646.0 421.6 644.9 414.2 647.2C406.8 649.5 396.5 656.9 390.1 658.0C383.6 659.2 381.1 654.8 375.5 654.0C369.9 653.3 359.6 653.5 356.4 653.5M699.5 602.4 L705.9 624.3M673.6 620.8C667.8 628.7 652.8 659.5 639.0 668.3C625.2 677.0 605.6 672.2 590.8 673.4C575.9 674.5 560.1 672.8 549.8 675.1C539.5 677.4 536.7 681.4 528.9 687.0C521.1 692.6 513.6 708.6 502.9 708.5C492.2 708.3 471.1 689.6 464.7 685.9M587.1 648.9 L590.8 673.4M578.9 596.0C578.9 599.2 577.1 606.2 578.5 615.1C579.8 623.9 585.7 643.2 587.1 648.9M549.8 675.1C548.7 672.2 546.2 669.1 543.4 658.0C540.7 647.0 535.1 616.9 533.4 608.7M647.2 513.1C650.4 518.3 657.4 537.9 666.3 544.2C675.3 550.6 690.4 545.0 700.9 551.2C711.4 557.5 724.4 576.5 729.1 581.5M666.3 544.2C667.5 548.9 668.1 562.5 673.6 572.2C679.1 581.9 695.2 597.3 699.5 602.4M591.7 487.0 L666.3 544.2M568.0 493.0 L582.6 459.6M568.0 493.0C568.7 501.5 572.8 532.8 572.1 544.2C571.4 555.7 565.3 558.8 563.9 561.7M597.6 543.6 L572.1 544.2M849.7 401.2C847.2 397.8 846.0 382.9 834.3 380.5C822.5 378.2 788.4 386.1 779.2 387.2M849.7 401.2 L853.4 368.3M807.9 417.6C806.8 417.3 806.3 420.8 801.5 415.7C796.7 410.7 782.9 392.0 779.2 387.2M733.7 516.0 L700.9 551.2M335.0 560.0 L355.9 529.6M335.0 560.0C336.9 561.9 342.1 566.4 346.4 571.7C350.7 576.9 356.1 577.7 360.9 591.4C365.8 605.1 373.1 643.6 375.5 654.0M360.9 591.4 L393.3 600.6M359.1 415.7C365.6 414.2 384.2 413.3 398.3 406.7C412.3 400.0 435.8 380.8 443.3 375.6M411.0 379.9C408.9 384.4 401.6 395.8 398.3 406.7C394.9 417.6 396.1 434.3 391.0 445.2C385.8 456.2 371.3 467.7 367.3 472.2M367.3 391.5C374.6 389.6 403.5 383.9 411.0 379.9C418.5 376.0 412.1 369.7 412.4 367.7M724.6 186.0C727.1 189.1 730.5 197.8 739.6 204.6C748.7 211.4 767.1 221.3 779.2 226.9C791.3 232.5 806.2 232.0 812.4 238.3C818.6 244.6 808.9 256.3 816.5 264.8C824.1 273.3 846.1 284.8 857.9 289.2C869.8 293.6 882.6 290.8 887.5 291.1M883.0 320.9C883.7 316.0 885.1 297.7 887.5 291.1C889.9 284.4 890.8 285.6 897.5 281.1C904.2 276.6 918.9 269.4 927.6 264.2C936.2 258.9 942.3 255.2 949.4 249.7C956.5 244.1 966.9 238.3 969.9 230.7C972.8 223.1 966.5 212.4 967.1 204.0C967.8 195.6 972.5 184.2 973.5 180.2M881.6 338.2 L883.0 320.9M949.4 249.7C952.8 248.5 961.6 239.5 969.9 242.7C978.1 246.0 994.8 262.4 999.0 269.2C1003.3 276.0 991.7 279.3 995.4 283.6C999.0 287.9 1016.6 293.0 1020.9 294.8M969.9 230.7 L969.9 242.7M999.0 269.2C1001.5 266.0 1010.3 257.2 1014.0 250.3C1017.7 243.4 1019.0 235.2 1021.3 227.5C1023.6 219.8 1026.6 207.9 1027.7 204.0M684.1 271.7C692.4 273.7 722.4 280.9 734.1 283.6C745.9 286.3 746.3 286.0 754.6 288.0C762.9 289.9 773.4 299.3 783.7 295.4C794.1 291.6 811.0 269.9 816.5 264.8M739.6 204.6 L734.1 283.6M724.6 186.0C725.2 196.1 726.6 230.3 728.2 246.5C729.8 262.8 733.1 277.4 734.1 283.6M816.5 264.8C815.8 260.4 812.4 247.3 812.4 238.3C812.4 229.3 815.1 223.1 816.5 211.0C817.9 198.8 822.0 180.3 820.6 165.4C819.2 150.6 810.4 129.2 808.3 121.9M724.6 186.0C734.4 182.4 767.7 167.6 783.7 164.1C799.7 160.7 802.7 171.9 820.6 165.4C838.5 158.9 879.4 131.9 891.1 125.2M897.5 281.1C896.5 273.1 889.0 245.7 891.1 233.2C893.3 220.8 910.3 224.5 910.3 206.5C910.3 188.5 894.3 138.7 891.1 125.2M816.5 264.8C821.9 261.3 840.2 251.9 848.8 244.0C857.4 236.1 860.9 219.1 867.9 217.3C875.0 215.6 887.3 230.6 891.1 233.2M816.5 264.8 L824.2 304.8M816.5 264.8 L777.8 261.6M724.6 186.0 L697.7 197.6M724.6 186.0 L772.8 185.4M927.6 264.2 L936.7 231.3M949.4 249.7C947.3 246.6 940.3 244.1 936.7 231.3C933.0 218.6 929.1 182.9 927.6 173.2M487.0 728.7C484.4 734.1 477.0 747.1 471.1 761.1C465.2 775.1 456.7 801.8 451.5 812.6C446.3 823.4 441.6 823.6 439.7 825.8M487.0 728.7C490.3 730.6 502.6 734.3 506.6 739.9C510.6 745.5 512.7 755.1 511.1 762.2C509.5 769.4 495.0 772.3 497.0 782.8C499.1 793.3 519.0 818.2 523.4 825.3M439.7 825.8C449.5 827.0 484.4 833.0 498.4 832.9C512.3 832.8 511.7 828.2 523.4 825.3C535.1 822.3 556.0 817.2 568.5 815.4C581.0 813.5 582.6 818.6 598.5 814.3C614.4 809.9 651.8 795.1 664.0 789.4C676.3 783.7 667.8 781.9 672.2 780.0C676.7 778.2 682.6 781.5 690.9 778.3C699.2 775.2 717.1 768.7 722.3 761.1C727.5 753.5 722.3 737.4 722.3 732.6M506.6 739.9C517.5 742.9 553.6 754.0 572.1 757.8C590.6 761.5 605.4 759.2 617.6 762.2C629.8 765.3 637.6 771.6 645.4 776.1C653.1 780.7 660.9 787.2 664.0 789.4M471.1 761.1C473.0 762.9 478.1 768.1 482.5 771.7C486.8 775.3 494.6 780.9 497.0 782.8M722.3 732.6C727.8 730.5 746.0 720.1 755.1 719.7C764.1 719.3 767.1 732.6 776.5 730.4C785.9 728.1 794.3 713.1 811.5 706.2C828.7 699.3 866.6 694.7 879.8 689.3C892.9 683.8 881.0 675.6 890.2 673.4C899.5 671.1 920.0 675.7 935.3 675.7C950.6 675.7 969.1 674.4 982.2 673.4C995.2 672.3 1002.0 665.8 1013.6 669.4C1025.2 673.0 1045.4 690.7 1051.8 694.9M890.2 673.4C896.6 677.0 915.6 688.5 928.5 694.9C941.4 701.3 956.1 710.1 967.6 711.8C979.1 713.5 983.2 707.9 997.2 705.1C1011.2 702.3 1042.7 696.6 1051.8 694.9M997.2 705.1C1002.9 711.0 1029.3 728.0 1031.8 740.5C1034.2 752.9 1015.1 773.4 1011.7 780.0M967.6 711.8C965.9 715.3 962.0 724.6 957.6 732.6C953.2 740.6 950.9 750.4 941.2 760.0C931.5 769.6 906.3 785.0 899.3 790.0M876.1 701.1 L899.3 790.0M879.8 689.3 L876.1 701.1M776.5 730.4 L811.0 751.1M757.3 749.4 L757.8 781.1M722.3 732.6C728.1 735.4 742.6 746.3 757.3 749.4C772.1 752.5 802.1 750.8 811.0 751.1M722.3 761.1 L757.8 781.1M997.2 705.1 L982.2 673.4M957.6 732.6 L1031.8 740.5M941.2 760.0 L1011.7 780.0M617.6 762.2 L598.5 814.3M811.0 751.1 L899.3 790.0M811.5 706.2 L811.0 751.1M928.5 694.9 L957.6 732.6" fill="none" stroke="#fbd67a" stroke-width="1.05" stroke-linecap="round" stroke-linejoin="round"/>
<path d="M348.0 370.0 L356.0 366.0 L362.0 360.0 L372.0 358.0 L374.0 366.0 L380.0 372.0 L390.0 371.0 L396.0 375.0 L404.0 372.0 L412.0 374.0 L420.0 372.0 L424.0 366.0 L432.0 368.0 L440.0 364.0 L452.0 366.0 L452.0 372.0 L455.0 383.0 L467.0 390.0 L458.0 404.0 L444.0 416.0 L436.0 423.0 L440.0 436.0 L440.0 460.0 L432.0 472.0 L438.0 482.0 L433.0 502.0 L408.0 506.0 L420.0 524.0 L428.0 532.0 L430.0 548.0 L418.0 560.0 L417.0 574.0 L422.0 586.0 L430.0 592.0 L436.0 590.0 L434.0 598.0 L426.0 602.0 L420.0 604.0 L414.0 620.0 L410.0 634.0 L414.0 648.0" fill="none" stroke="#6b7480" stroke-width="1" stroke-linejoin="round" stroke-linecap="round" />
<path d="M674.0 276.0 L680.0 283.0 L690.0 288.0 L700.0 300.0 L716.0 304.0 L728.0 312.0 L740.0 318.0 L752.0 316.0 L760.0 322.0 L775.0 320.0 L782.0 312.0 L800.0 314.0 L812.0 316.0 L818.0 324.0 L826.0 328.0 L836.0 334.0 L850.0 338.0 L862.0 346.0 L870.0 342.0 L880.0 340.0 L890.0 337.0" fill="none" stroke="#6b7480" stroke-width="1" stroke-linejoin="round" stroke-linecap="round" />
<path d="M650.0 766.0 L656.0 774.0 L662.0 779.0 L669.0 787.0 L672.0 802.0 L677.0 823.0" fill="none" stroke="#6b7480" stroke-width="1" stroke-linejoin="round" stroke-linecap="round" />
</g>
<rect x="925" y="481.3" width="5.8" height="7.6" fill="#fff"/>
<g>
<circle cx="407.3" cy="301.8" r="2.1" fill="#fff" stroke="#333" stroke-width="1.1"/>
<circle cx="484.9" cy="279.6" r="2.1" fill="#fff" stroke="#333" stroke-width="1.1"/>
<circle cx="576.7" cy="273.1" r="2.1" fill="#fff" stroke="#333" stroke-width="1.1"/>
<circle cx="497" cy="327" r="2.1" fill="#fff" stroke="#333" stroke-width="1.1"/>
<circle cx="582.7" cy="342" r="2.1" fill="#fff" stroke="#333" stroke-width="1.1"/>
<circle cx="536" cy="385" r="2.1" fill="#fff" stroke="#333" stroke-width="1.1"/>
<circle cx="368.2" cy="391.7" r="2.1" fill="#fff" stroke="#333" stroke-width="1.1"/>
<circle cx="358.6" cy="415.7" r="2.6" fill="#fff" stroke="#222" stroke-width="1.4"/>
<circle cx="357" cy="446" r="2.1" fill="#fff" stroke="#333" stroke-width="1.1"/>
<circle cx="368" cy="473" r="2.1" fill="#fff" stroke="#333" stroke-width="1.1"/>
<circle cx="493" cy="427" r="2.1" fill="#fff" stroke="#333" stroke-width="1.1"/>
<circle cx="568" cy="492.7" r="2.1" fill="#fff" stroke="#333" stroke-width="1.1"/>
<circle cx="335" cy="560" r="3.3" fill="#fff" stroke="#222" stroke-width="1.3"/><circle cx="335" cy="560" r="1.4" fill="#111"/>
<circle cx="375.8" cy="654" r="1.5" fill="#fff" stroke="#555" stroke-width="0.9"/>
<circle cx="390" cy="658" r="2.1" fill="#fff" stroke="#333" stroke-width="1.1"/>
<circle cx="532.6" cy="607.6" r="2.1" fill="#fff" stroke="#333" stroke-width="1.1"/>
<circle cx="465" cy="686" r="2.1" fill="#fff" stroke="#333" stroke-width="1.1"/>
<circle cx="528.9" cy="687" r="2.1" fill="#fff" stroke="#333" stroke-width="1.1"/>
<circle cx="541" cy="684.5" r="2.1" fill="#fff" stroke="#333" stroke-width="1.1"/>
<circle cx="550.3" cy="676" r="2.6" fill="#fff" stroke="#222" stroke-width="1.4"/>
<circle cx="587.4" cy="649" r="2.1" fill="#fff" stroke="#333" stroke-width="1.1"/>
<circle cx="639" cy="669" r="2.1" fill="#fff" stroke="#333" stroke-width="1.1"/>
<circle cx="507.2" cy="738.7" r="2.1" fill="#fff" stroke="#333" stroke-width="1.1"/>
<circle cx="665" cy="789" r="2.1" fill="#fff" stroke="#333" stroke-width="1.1"/>
<circle cx="891.8" cy="673.9" r="3.3" fill="#fff" stroke="#222" stroke-width="1.3"/><circle cx="891.8" cy="673.9" r="1.4" fill="#111"/>
<circle cx="928.8" cy="694.6" r="2.1" fill="#fff" stroke="#333" stroke-width="1.1"/>
<circle cx="1012.8" cy="669" r="2.1" fill="#fff" stroke="#333" stroke-width="1.1"/>
<circle cx="1010" cy="706.6" r="2.1" fill="#fff" stroke="#333" stroke-width="1.1"/>
<circle cx="1031" cy="741" r="2.1" fill="#fff" stroke="#333" stroke-width="1.1"/>
<circle cx="940.9" cy="759.8" r="2.1" fill="#fff" stroke="#333" stroke-width="1.1"/>
<circle cx="1011.8" cy="779.7" r="2.1" fill="#fff" stroke="#333" stroke-width="1.1"/>
<circle cx="898.7" cy="790" r="2.1" fill="#fff" stroke="#333" stroke-width="1.1"/>
<circle cx="666" cy="544" r="2.1" fill="#fff" stroke="#333" stroke-width="1.1"/>
<circle cx="756.4" cy="552.6" r="2.1" fill="#fff" stroke="#333" stroke-width="1.1"/>
<circle cx="699.7" cy="602.3" r="2.6" fill="#fff" stroke="#222" stroke-width="1.4"/>
<circle cx="816" cy="549" r="2.1" fill="#fff" stroke="#333" stroke-width="1.1"/>
<circle cx="871.7" cy="510.5" r="2.6" fill="#fff" stroke="#222" stroke-width="1.4"/>
<circle cx="850" cy="401" r="2.6" fill="#fff" stroke="#222" stroke-width="1.4"/>
<circle cx="807.9" cy="417.8" r="2.1" fill="#fff" stroke="#333" stroke-width="1.1"/>
<circle cx="724.8" cy="186" r="2.1" fill="#fff" stroke="#333" stroke-width="1.1"/>
<circle cx="816.7" cy="264.7" r="2.6" fill="#fff" stroke="#222" stroke-width="1.4"/>
<circle cx="684.3" cy="271.3" r="2.1" fill="#fff" stroke="#333" stroke-width="1.1"/>
<circle cx="675.9" cy="313.8" r="2.1" fill="#fff" stroke="#333" stroke-width="1.1"/>
<circle cx="969.8" cy="243" r="2.1" fill="#fff" stroke="#333" stroke-width="1.1"/>
<circle cx="927.3" cy="264.6" r="2.6" fill="#fff" stroke="#222" stroke-width="1.4"/>
<circle cx="995.5" cy="283.7" r="2.6" fill="#fff" stroke="#222" stroke-width="1.4"/>
<circle cx="858" cy="288.7" r="2.1" fill="#fff" stroke="#333" stroke-width="1.1"/>
<circle cx="882.8" cy="322" r="2.1" fill="#fff" stroke="#333" stroke-width="1.1"/>
<circle cx="1012.2" cy="163" r="2.1" fill="#fff" stroke="#333" stroke-width="1.1"/>
<circle cx="710.6" cy="385.8" r="2.6" fill="#fff" stroke="#222" stroke-width="1.4"/>
<circle cx="362" cy="310" r="2.1" fill="#fff" stroke="#333" stroke-width="1.1"/>
<circle cx="615" cy="285" r="2.6" fill="#fff" stroke="#222" stroke-width="1.4"/>
<circle cx="661" cy="282" r="2.1" fill="#fff" stroke="#333" stroke-width="1.1"/>
<circle cx="640" cy="329" r="2.1" fill="#fff" stroke="#333" stroke-width="1.1"/>
<circle cx="368" cy="278" r="2.1" fill="#fff" stroke="#333" stroke-width="1.1"/>
<circle cx="729" cy="583" r="2.1" fill="#fff" stroke="#333" stroke-width="1.1"/>
<circle cx="487" cy="634" r="2.6" fill="#fff" stroke="#222" stroke-width="1.4"/>
<circle cx="583" cy="456" r="3.3" fill="#fff" stroke="#222" stroke-width="1.3"/><circle cx="583" cy="456" r="1.4" fill="#111"/>
<circle cx="749" cy="512" r="2.6" fill="#fff" stroke="#222" stroke-width="1.4"/>
<circle cx="352" cy="340" r="2.1" fill="#fff" stroke="#333" stroke-width="1.1"/>
<circle cx="867" cy="371" r="2.1" fill="#fff" stroke="#333" stroke-width="1.1"/>
</g>
<g text-anchor="middle" stroke="#fff" stroke-linejoin="round" paint-order="stroke" style="paint-order:stroke">
<text x="600" y="520.5" font-size="17" font-weight="bold" fill="#202124" stroke-width="3.2" textLength="59" lengthAdjust="spacingAndGlyphs">España</text>
<text x="359.5" y="509.5" font-size="17" font-weight="bold" fill="#202124" stroke-width="3.2" textLength="68" lengthAdjust="spacingAndGlyphs">Portugal</text>
<text x="822" y="337.0" font-size="17" font-weight="bold" fill="#202124" stroke-width="3.2" textLength="64" lengthAdjust="spacingAndGlyphs">Andorra</text>
<text x="507" y="714.0" font-size="17" font-weight="bold" fill="#202124" stroke-width="3.2" textLength="69" lengthAdjust="spacingAndGlyphs">Gibraltar</text>
<text x="358.6" y="409.6" font-size="14.5" font-weight="bold" fill="#202124" stroke-width="3" textLength="43" lengthAdjust="spacingAndGlyphs">Oporto</text>
<text x="710.6" y="379.7" font-size="14.5" font-weight="bold" fill="#202124" stroke-width="3" textLength="58" lengthAdjust="spacingAndGlyphs">Zaragoza</text>
<text x="850" y="395.1" font-size="14.5" font-weight="bold" fill="#202124" stroke-width="3" textLength="61" lengthAdjust="spacingAndGlyphs">Barcelona</text>
<text x="733.8" y="510.1" font-size="14.5" font-weight="bold" fill="#202124" stroke-width="3" textLength="53" lengthAdjust="spacingAndGlyphs">Valencia</text>
<text x="702.5" y="596.4" font-size="14.5" font-weight="bold" fill="#202124" stroke-width="3" textLength="38" lengthAdjust="spacingAndGlyphs">Murcia</text>
<text x="817" y="258.3" font-size="14.5" font-weight="bold" fill="#202124" stroke-width="3" textLength="57" lengthAdjust="spacingAndGlyphs">Toulouse</text>
<text x="927.7" y="258.5" font-size="14.5" font-weight="bold" fill="#202124" stroke-width="3" textLength="71" lengthAdjust="spacingAndGlyphs">Montpellier</text>
<text x="995" y="277.6" font-size="14.5" font-weight="bold" fill="#202124" stroke-width="3" textLength="54" lengthAdjust="spacingAndGlyphs">Marsella</text>
<text x="892" y="652.1" font-size="14.5" font-weight="bold" fill="#202124" stroke-width="3" textLength="29" lengthAdjust="spacingAndGlyphs">Argel</text>
<text x="438" y="805.1" font-size="14.5" font-weight="bold" fill="#202124" stroke-width="3" textLength="38" lengthAdjust="spacingAndGlyphs">Rabat</text>
<text x="523" y="804.5" font-size="14.5" font-weight="bold" fill="#202124" stroke-width="3" textLength="22.5" lengthAdjust="spacingAndGlyphs">Fez</text>
<text x="871.5" y="504.6" font-size="14.5" font-weight="bold" fill="#202124" stroke-width="3" textLength="38.5" lengthAdjust="spacingAndGlyphs">Palma</text>
<text x="617.6" y="279.1" font-size="14.5" font-weight="bold" fill="#202124" stroke-width="3" textLength="40" lengthAdjust="spacingAndGlyphs">Bilbao</text>
<text x="582" y="453.1" font-size="14.5" font-weight="bold" fill="#202124" stroke-width="3" textLength="44" lengthAdjust="spacingAndGlyphs">Madrid</text>
<text x="480" y="630.1" font-size="14.5" font-weight="bold" fill="#202124" stroke-width="3" textLength="40" lengthAdjust="spacingAndGlyphs">Sevilla</text>
<text x="551" y="670.1" font-size="14.5" font-weight="bold" fill="#202124" stroke-width="3" textLength="45" lengthAdjust="spacingAndGlyphs">Málaga</text>
<text x="334.6" y="553.0" font-size="14" font-weight="normal" fill="#202124" stroke-width="3" textLength="41" lengthAdjust="spacingAndGlyphs">Lisboa</text>
<text x="368.5" y="274.1" font-size="11.5" font-weight="normal" fill="#3c4043" stroke-width="2.6" textLength="45" lengthAdjust="spacingAndGlyphs">A Coruña</text>
<text x="362" y="293.1" font-size="11.5" font-weight="normal" fill="#3c4043" stroke-width="2.6" textLength="58" lengthAdjust="spacingAndGlyphs">Santiago de</text>
<text x="362" y="304.1" font-size="11.5" font-weight="normal" fill="#3c4043" stroke-width="2.6" textLength="59" lengthAdjust="spacingAndGlyphs">Compostela</text>
<text x="407" y="296.1" font-size="11.5" font-weight="normal" fill="#3c4043" stroke-width="2.6" textLength="24" lengthAdjust="spacingAndGlyphs">Lugo</text>
<text x="484.5" y="293.1" font-size="11.5" font-weight="normal" fill="#3c4043" stroke-width="2.6" textLength="32" lengthAdjust="spacingAndGlyphs">Oviedo</text>
<text x="547.6" y="277.1" font-size="11.5" font-weight="normal" fill="#3c4043" stroke-width="2.6" textLength="48" lengthAdjust="spacingAndGlyphs">Santander</text>
<text x="497" y="322.1" font-size="11.5" font-weight="normal" fill="#3c4043" stroke-width="2.6" textLength="23" lengthAdjust="spacingAndGlyphs">León</text>
<text x="583.4" y="337.1" font-size="11.5" font-weight="normal" fill="#3c4043" stroke-width="2.6" textLength="34" lengthAdjust="spacingAndGlyphs">Burgos</text>
<text x="536.6" y="379.9" font-size="11.5" font-weight="normal" fill="#3c4043" stroke-width="2.6" textLength="48" lengthAdjust="spacingAndGlyphs">Valladolid</text>
<text x="367.5" y="386.3" font-size="11.5" font-weight="normal" fill="#3c4043" stroke-width="2.6" textLength="28" lengthAdjust="spacingAndGlyphs">Braga</text>
<text x="357" y="441.1" font-size="11.5" font-weight="normal" fill="#3c4043" stroke-width="2.6" textLength="30" lengthAdjust="spacingAndGlyphs">Aveiro</text>
<text x="367.7" y="467.1" font-size="11.5" font-weight="normal" fill="#3c4043" stroke-width="2.6" textLength="41" lengthAdjust="spacingAndGlyphs">Coímbra</text>
<text x="493.5" y="421.1" font-size="11.5" font-weight="normal" fill="#3c4043" stroke-width="2.6" textLength="54" lengthAdjust="spacingAndGlyphs">Salamanca</text>
<text x="568" y="487.4" font-size="11.5" font-weight="normal" fill="#3c4043" stroke-width="2.6" textLength="33" lengthAdjust="spacingAndGlyphs">Toledo</text>
<text x="376" y="650.1" font-size="11.5" font-weight="normal" fill="#3c4043" stroke-width="2.6" textLength="44" lengthAdjust="spacingAndGlyphs">Albufeira</text>
<text x="390" y="672.1" font-size="11.5" font-weight="normal" fill="#3c4043" stroke-width="2.6" textLength="22" lengthAdjust="spacingAndGlyphs">Faro</text>
<text x="536" y="603.1" font-size="11.5" font-weight="normal" fill="#3c4043" stroke-width="2.6" textLength="40" lengthAdjust="spacingAndGlyphs">Córdoba</text>
<text x="587" y="646.1" font-size="11.5" font-weight="normal" fill="#3c4043" stroke-width="2.6" textLength="41" lengthAdjust="spacingAndGlyphs">Granada</text>
<text x="465" y="681.1" font-size="11.5" font-weight="normal" fill="#3c4043" stroke-width="2.6" textLength="27" lengthAdjust="spacingAndGlyphs">Cádiz</text>
<text x="503.4" y="691.1" font-size="11.5" font-weight="normal" fill="#3c4043" stroke-width="2.6" textLength="42" lengthAdjust="spacingAndGlyphs">Marbella</text>
<text x="571" y="689.1" font-size="11.5" font-weight="normal" fill="#3c4043" stroke-width="2.6" textLength="50.5" lengthAdjust="spacingAndGlyphs">Fuengirola</text>
<text x="639" y="663.1" font-size="11.5" font-weight="normal" fill="#3c4043" stroke-width="2.6" textLength="37" lengthAdjust="spacingAndGlyphs">Almería</text>
<text x="507.7" y="752.1" font-size="11.5" font-weight="normal" fill="#3c4043" stroke-width="2.6" textLength="33" lengthAdjust="spacingAndGlyphs">Tetuán</text>
<text x="644.6" y="788.1" font-size="11.5" font-weight="normal" fill="#3c4043" stroke-width="2.6" textLength="30" lengthAdjust="spacingAndGlyphs">Uchda</text>
<text x="928.8" y="708.1" font-size="11.5" font-weight="normal" fill="#3c4043" stroke-width="2.6" textLength="31" lengthAdjust="spacingAndGlyphs">Bouira</text>
<text x="1012.6" y="653.4" font-size="11.5" font-weight="normal" fill="#3c4043" stroke-width="2.6" textLength="20" lengthAdjust="spacingAndGlyphs">Jijel</text>
<text x="1010.5" y="690.7" font-size="11.5" font-weight="normal" fill="#3c4043" stroke-width="2.6" textLength="42" lengthAdjust="spacingAndGlyphs">El Eulma</text>
<text x="1031.5" y="725.1" font-size="11.5" font-weight="normal" fill="#3c4043" stroke-width="2.6" textLength="28" lengthAdjust="spacingAndGlyphs">Batna</text>
<text x="971.3" y="758.1" font-size="11.5" font-weight="normal" fill="#3c4043" stroke-width="2.6" textLength="52" lengthAdjust="spacingAndGlyphs">Bou Saâda</text>
<text x="1031.5" y="777.8" font-size="11.5" font-weight="normal" fill="#3c4043" stroke-width="2.6" textLength="30" lengthAdjust="spacingAndGlyphs">Biskra</text>
<text x="898.8" y="762.1" font-size="11.5" font-weight="normal" fill="#3c4043" stroke-width="2.6" textLength="45" lengthAdjust="spacingAndGlyphs">Provincia</text>
<text x="898.8" y="772.7" font-size="11.5" font-weight="normal" fill="#3c4043" stroke-width="2.6" textLength="43" lengthAdjust="spacingAndGlyphs">de Djelfa</text>
<text x="666.5" y="538.1" font-size="11.5" font-weight="normal" fill="#3c4043" stroke-width="2.6" textLength="43" lengthAdjust="spacingAndGlyphs">Albacete</text>
<text x="757.5" y="548.1" font-size="11.5" font-weight="normal" fill="#3c4043" stroke-width="2.6" textLength="27" lengthAdjust="spacingAndGlyphs">Dénia</text>
<text x="727" y="565.1" font-size="11.5" font-weight="normal" fill="#3c4043" stroke-width="2.6" textLength="42" lengthAdjust="spacingAndGlyphs">Alicante</text>
<text x="727" y="576.1" font-size="11.5" font-weight="normal" fill="#3c4043" stroke-width="2.6" textLength="46" lengthAdjust="spacingAndGlyphs">(Alacant)</text>
<text x="816" y="543.9" font-size="11.5" font-weight="normal" fill="#3c4043" stroke-width="2.6" textLength="23" lengthAdjust="spacingAndGlyphs">Ibiza</text>
<text x="809.3" y="412.7" font-size="11.5" font-weight="normal" fill="#3c4043" stroke-width="2.6" textLength="46" lengthAdjust="spacingAndGlyphs">Tarragona</text>
<text x="724" y="181.1" font-size="11.5" font-weight="normal" fill="#3c4043" stroke-width="2.6" textLength="40" lengthAdjust="spacingAndGlyphs">Burdeos</text>
<text x="686" y="266.1" font-size="11.5" font-weight="normal" fill="#3c4043" stroke-width="2.6" textLength="35" lengthAdjust="spacingAndGlyphs">Bayona</text>
<text x="858.5" y="283.1" font-size="11.5" font-weight="normal" fill="#3c4043" stroke-width="2.6" textLength="52" lengthAdjust="spacingAndGlyphs">Carcasona</text>
<text x="664" y="296.1" font-size="11.5" font-weight="normal" fill="#3c4043" stroke-width="2.6" textLength="64" lengthAdjust="spacingAndGlyphs">San Sebastián</text>
<text x="676.3" y="308.1" font-size="11.5" font-weight="normal" fill="#3c4043" stroke-width="2.6" textLength="48" lengthAdjust="spacingAndGlyphs">Pamplona</text>
<text x="630" y="324.1" font-size="11.5" font-weight="normal" fill="#3c4043" stroke-width="2.6" textLength="68" lengthAdjust="spacingAndGlyphs">Vitoria-Gasteiz</text>
<text x="969.8" y="237.1" font-size="11.5" font-weight="normal" fill="#3c4043" stroke-width="2.6" textLength="34" lengthAdjust="spacingAndGlyphs">Aviñón</text>
<text x="883" y="316.3" font-size="11.5" font-weight="normal" fill="#3c4043" stroke-width="2.6" textLength="43" lengthAdjust="spacingAndGlyphs">Perpiñán</text>
<text x="874" y="366.1" font-size="11.5" font-weight="normal" fill="#3c4043" stroke-width="2.6" textLength="30" lengthAdjust="spacingAndGlyphs">Girona</text>
<text x="507.7" y="763.9" font-size="11" font-weight="normal" fill="#3c4043" stroke-width="2.4">تطوان</text>
<text x="438" y="818.9" font-size="11" font-weight="normal" fill="#3c4043" stroke-width="2.4">الرباط</text>
<text x="523" y="818.9" font-size="11" font-weight="normal" fill="#3c4043" stroke-width="2.4">فاس</text>
<text x="644.6" y="798.9" font-size="11" font-weight="normal" fill="#3c4043" stroke-width="2.4">وجدة</text>
<text x="890.7" y="668.0" font-size="14" font-weight="normal" fill="#202124" stroke-width="2.8">مدينة الجزائر</text>
<text x="928.8" y="719.4" font-size="11" font-weight="normal" fill="#3c4043" stroke-width="2.4">البويرة</text>
<text x="1012.6" y="664.5" font-size="11" font-weight="normal" fill="#3c4043" stroke-width="2.4">جيجل</text>
<text x="1010.5" y="701.9" font-size="11" font-weight="normal" fill="#3c4043" stroke-width="2.4">العلمة</text>
<text x="1031.5" y="735.9" font-size="11" font-weight="normal" fill="#3c4043" stroke-width="2.4">باتنة</text>
<text x="971.3" y="769.4" font-size="11" font-weight="normal" fill="#3c4043" stroke-width="2.4">بوسعادة</text>
<text x="1031.5" y="788.9" font-size="11" font-weight="normal" fill="#3c4043" stroke-width="2.4">بسكرة</text>
<text x="898.8" y="783.6" font-size="11" font-weight="normal" fill="#3c4043" stroke-width="2.4">الجلفة</text>
<text x="832" y="476" font-size="11.5" font-style="italic" fill="#1967d2" stroke="none" transform="rotate(-46 832 472)" textLength="58" lengthAdjust="spacingAndGlyphs">Mar Balear</text>
<text x="603" y="721" font-size="11.5" font-style="italic" fill="#1967d2" stroke="none" transform="rotate(12 603 717)" textLength="76" lengthAdjust="spacingAndGlyphs">Mar de Alborán</text>
<text x="582" y="148" font-size="11.5" font-style="italic" fill="#1967d2" stroke="none" transform="rotate(28 582 144)" textLength="86" lengthAdjust="spacingAndGlyphs">Golfo de Vizcaya</text>
</g>
<g>
<use href="#mk" x="479.5" y="241"/>
<use href="#mk" x="493.5" y="243"/>
<use href="#mk" x="379" y="247"/>
<use href="#mk" x="375" y="251"/>
<use href="#mk" x="372" y="253"/>
<use href="#mk" x="368" y="255"/>
<use href="#mk" x="483.5" y="255"/>
<use href="#mk" x="668.3" y="256"/>
<use href="#mk" x="665.3" y="257"/>
<use href="#mk" x="617.5" y="258"/>
<use href="#mk" x="613.5" y="258.7"/>
<use href="#mk" x="364.5" y="259"/>
<use href="#mk" x="492" y="259"/>
<use href="#mk" x="622.8" y="259"/>
<use href="#mk" x="661.7" y="259"/>
<use href="#mk" x="611" y="260.5"/>
<use href="#mk" x="620.2" y="263.4"/>
<use href="#mk" x="362" y="286"/>
<use href="#mk" x="629.8" y="288"/>
<use href="#mk" x="676" y="289.7"/>
<use href="#mk" x="497" y="302"/>
<use href="#mk" x="639.8" y="312"/>
<use href="#mk" x="393" y="319"/>
<use href="#mk" x="583" y="319"/>
<use href="#mk" x="354" y="324"/>
<use href="#mk" x="350" y="333"/>
<use href="#mk" x="835" y="334"/>
<use href="#mk" x="545" y="341"/>
<use href="#mk" x="893.5" y="348.4"/>
<use href="#mk" x="639" y="353.5"/>
<use href="#mk" x="880" y="358"/>
<use href="#mk" x="536.6" y="360"/>
<use href="#mk" x="583" y="360"/>
<use href="#mk" x="532.6" y="363"/>
<use href="#mk" x="711" y="363"/>
<use href="#mk" x="778.8" y="363"/>
<use href="#mk" x="864.4" y="364"/>
<use href="#mk" x="844.4" y="364"/>
<use href="#mk" x="865" y="366"/>
<use href="#mk" x="850.4" y="367"/>
<use href="#mk" x="859" y="367"/>
<use href="#mk" x="860.4" y="368"/>
<use href="#mk" x="853" y="369.5"/>
<use href="#mk" x="489" y="370"/>
<use href="#mk" x="838.4" y="370"/>
<use href="#mk" x="846.4" y="372"/>
<use href="#mk" x="835.8" y="372.7"/>
<use href="#mk" x="854.4" y="373"/>
<use href="#mk" x="848.4" y="377"/>
<use href="#mk" x="840.4" y="378"/>
<use href="#mk" x="841" y="383.7"/>
<use href="#mk" x="800.3" y="390"/>
<use href="#mk" x="807" y="393.8"/>
<use href="#mk" x="493" y="402"/>
<use href="#mk" x="774.8" y="412.2"/>
<use href="#mk" x="568.8" y="422"/>
<use href="#mk" x="577.7" y="425"/>
<use href="#mk" x="586.8" y="427.4"/>
<use href="#mk" x="592.8" y="428.8"/>
<use href="#mk" x="581.5" y="430"/>
<use href="#mk" x="576" y="431.4"/>
<use href="#mk" x="594.8" y="431.4"/>
<use href="#mk" x="589.5" y="432.8"/>
<use href="#mk" x="584" y="435.4"/>
<use href="#mk" x="571.5" y="443.5"/>
<use href="#mk" x="580.1" y="444.8"/>
<use href="#mk" x="586.7" y="458"/>
<use href="#mk" x="474" y="459"/>
<use href="#mk" x="567.7" y="468"/>
<use href="#mk" x="884" y="476.5"/>
<use href="#mk" x="879" y="482"/>
<use href="#mk" x="876" y="484.5"/>
<use href="#mk" x="897" y="485.4"/>
<use href="#mk" x="874" y="486.4"/>
<use href="#mk" x="734.3" y="492"/>
<use href="#mk" x="730.3" y="497"/>
<use href="#mk" x="666.2" y="521"/>
<use href="#mk" x="743.4" y="521"/>
<use href="#mk" x="816" y="524.5"/>
<use href="#mk" x="434" y="526.5"/>
<use href="#mk" x="723.3" y="530"/>
<use href="#mk" x="729" y="536"/>
<use href="#mk" x="745.4" y="546"/>
<use href="#mk" x="740.4" y="547"/>
<use href="#mk" x="530" y="556"/>
<use href="#mk" x="728.3" y="556"/>
<use href="#mk" x="720.3" y="562"/>
<use href="#mk" x="725.7" y="567"/>
<use href="#mk" x="584.7" y="571"/>
<use href="#mk" x="696.3" y="574"/>
<use href="#mk" x="699" y="575"/>
<use href="#mk" x="596.8" y="576"/>
<use href="#mk" x="533.6" y="584.6"/>
<use href="#mk" x="580.7" y="590"/>
<use href="#mk" x="569.7" y="594"/>
<use href="#mk" x="511" y="595"/>
<use href="#mk" x="673.8" y="598"/>
<use href="#mk" x="479.5" y="606"/>
<use href="#mk" x="483" y="609"/>
<use href="#mk" x="476.5" y="610"/>
<use href="#mk" x="481.5" y="614"/>
<use href="#mk" x="474" y="616"/>
<use href="#mk" x="453" y="616"/>
<use href="#mk" x="484.5" y="618"/>
<use href="#mk" x="608" y="618"/>
<use href="#mk" x="435" y="619.7"/>
<use href="#mk" x="582.7" y="620"/>
<use href="#mk" x="586.7" y="624.7"/>
<use href="#mk" x="488" y="624.7"/>
<use href="#mk" x="639" y="643"/>
<use href="#mk" x="471.2" y="644.5"/>
<use href="#mk" x="549.4" y="645.2"/>
<use href="#mk" x="541" y="647"/>
<use href="#mk" x="555.4" y="647.2"/>
<use href="#mk" x="548.6" y="648"/>
<use href="#mk" x="564.3" y="649"/>
<use href="#mk" x="472.4" y="650"/>
<use href="#mk" x="534" y="652"/>
<use href="#mk" x="543.6" y="652"/>
<use href="#mk" x="468.4" y="656"/>
<use href="#mk" x="536.6" y="656"/>
<use href="#mk" x="466.4" y="660"/>
<use href="#mk" x="528.6" y="660"/>
<use href="#mk" x="463" y="662"/>
<use href="#mk" x="539.8" y="662"/>
<use href="#mk" x="470.8" y="668"/>
<use href="#mk" x="617" y="730.6"/>
</g>
<g><rect x="15" y="169" width="173" height="40" rx="2" fill="#fff" style="filter:drop-shadow(0 1px 2px rgba(0,0,0,.3))"/><rect x="93" y="169" width="1" height="40" fill="#e6e6e6"/>
<text x="54.5" y="194.8" text-anchor="middle" font-size="18" fill="#000" stroke="#000" stroke-width="0.5" textLength="45" lengthAdjust="spacingAndGlyphs">Mapa</text>
<text x="141" y="194.8" text-anchor="middle" font-size="18" fill="#565656" textLength="60" lengthAdjust="spacingAndGlyphs">Satélite</text></g>
<g font-size="17.2" stroke="#fff" stroke-width="2.2" stroke-linejoin="round" style="paint-order:stroke" letter-spacing="-0.35"><text x="14.8" y="817.3"><tspan fill="#4285f4" font-size="19.5">G</tspan><tspan fill="#ea4335">o</tspan><tspan fill="#fbbc05">o</tspan><tspan fill="#4285f4">g</tspan><tspan fill="#34a853">l</tspan><tspan fill="#ea4335">e</tspan></text></g>
<rect x="824" y="811" width="230" height="12" fill="#f5f5f5" opacity="0.7"/>
<text x="829" y="821" font-size="10" fill="#333" textLength="111" lengthAdjust="spacingAndGlyphs">Combinaciones de teclas</text>
<text x="953" y="821" font-size="10" fill="#333" letter-spacing="1.1">Datos de mapas ©2023</text>
</svg>
</div>

<!-- RIGHT PANEL -->
<div id="pnl" class="abs"></div><div id="pnlb" class="abs"></div>
<div id="pnlh" class="abs">Búsqueda con condiciones</div>
<div class="abs btn" style="left:1063px;top:140px"><svg width="32" height="32" viewBox="0 0 32 32"><circle cx="14.4" cy="12.5" r="9.6" fill="none" stroke="#fff" stroke-width="1.25"/><path d="M21.2 19.3 L28.3 26.2" stroke="#fff" stroke-width="1.35"/></svg><span>Buscar</span></div>
<div class="abs btn" style="left:1134px;top:140px"><svg width="32" height="32" viewBox="0 0 32 32"><path d="M8.2 14.8 A9.5 9.5 0 1 1 17.7 24.3" fill="none" stroke="#fff" stroke-width="1.25"/><path d="M3.7 15.1 L8.5 19.7 L13.4 15.1" fill="none" stroke="#fff" stroke-width="1.25"/></svg><span>Reset</span></div>
<div class="abs btn" style="left:1205px;top:140px"><svg width="32" height="32" viewBox="0 0 32 32"><circle cx="16" cy="14.4" r="11.6" fill="none" stroke="#fff" stroke-width="1.25"/><text x="16" y="20" text-anchor="middle" font-family="Liberation Sans, sans-serif" font-weight="normal" font-size="15.5" fill="#fff" style="text-shadow:none">?</text></svg><span>Ayuda</span></div>
<div class="abs lab" style="left:1068px;top:230px">NºIncidencia</div>
<div class="abs inp" style="top:228px;width:100px;text-align:center;font-size:11.5px;color:#333;padding-top:6px">0</div>
<div class="abs lab" style="left:1068px;top:264px">Centro</div>
<div class="abs inp" style="top:262px;width:200px"></div>
<div class="abs lab" style="left:1068px;top:299px">Tipo Centro</div>
<div class="abs sel" style="top:297px">(Sin seleccionar)<i></i><svg width="16" height="12" viewBox="0 0 16 12"><path d="M0.5 3 L4 7" stroke="#c4c4c4" stroke-width="1.6" fill="none"/><path d="M4.5 3.5 L8.5 7.5 L12.5 3.5" stroke="#0f1f78" stroke-width="2.2" fill="none"/></svg></div>
<div class="abs lab" style="left:1068px;top:335px">Prioridad</div>
<div class="abs sel" style="top:333px">(sin selección)<i></i><svg width="16" height="12" viewBox="0 0 16 12"><path d="M0.5 3 L4 7" stroke="#c4c4c4" stroke-width="1.6" fill="none"/><path d="M4.5 3.5 L8.5 7.5 L12.5 3.5" stroke="#0f1f78" stroke-width="2.2" fill="none"/></svg></div>
<div class="abs lab" style="left:1068px;top:371px">Perío. Cierre</div>
<div class="abs sel" style="top:369px">(Sin selección)<i></i><svg width="16" height="12" viewBox="0 0 16 12"><path d="M0.5 3 L4 7" stroke="#c4c4c4" stroke-width="1.6" fill="none"/><path d="M4.5 3.5 L8.5 7.5 L12.5 3.5" stroke="#0f1f78" stroke-width="2.2" fill="none"/></svg></div>
<div class="abs chk" style="top:408px"></div><div class="abs cl" style="top:408px">Ver sólo pendientes</div>
<div class="abs chk" style="top:441px"></div><div class="abs cl" style="top:441px">Búsqueda exacta</div>
<div class="abs chk" style="top:474px"></div><div class="abs cl" style="top:474px">Sólo con seguro</div>
<div class="abs chk" style="top:507px"></div><div class="abs cl" style="top:507px">Sólo PRL</div>
<div class="abs chk" style="top:540px"></div><div class="abs cl" style="top:540px">TREND</div>
<div class="abs chk" style="top:572px"></div><div class="abs cl" style="top:572px">Inquilino</div>
<div class="abs lab" style="left:1068px;top:604px">NºSin.</div>
<div class="abs inp" style="top:602px;width:150px"></div>
<div class="abs lab" style="left:1068px;top:639px">Login Supervisor</div>
<div class="abs inp" style="top:637px;width:200px"></div>
<div class="abs lab" style="left:1068px;top:674px">Login Contacto</div>
<div class="abs inp" style="top:672px;width:200px"></div>
<div class="abs lab" style="left:1066px;top:733px">Tipo de incidencias</div>
<div class="abs" style="left:1065px;top:762px;width:357px;height:1px;background:#8a8a8a"></div>
<div class="abs lab" style="left:1068px;top:779px">División</div>
<div class="abs sel" style="top:777px">(Sin seleccionar)<i></i><svg width="16" height="12" viewBox="0 0 16 12"><path d="M0.5 3 L4 7" stroke="#c4c4c4" stroke-width="1.6" fill="none"/><path d="M4.5 3.5 L8.5 7.5 L12.5 3.5" stroke="#0f1f78" stroke-width="2.2" fill="none"/></svg></div>
<div class="abs lab" style="left:1068px;top:815px">Servicios</div>
<div class="abs sel" style="top:813px"><i></i><svg width="16" height="12" viewBox="0 0 16 12"><path d="M0.5 3 L4 7" stroke="#c4c4c4" stroke-width="1.6" fill="none"/><path d="M4.5 3.5 L8.5 7.5 L12.5 3.5" stroke="#0f1f78" stroke-width="2.2" fill="none"/></svg></div>
<div class="abs" style="left:1437px;top:126px;width:17px;height:697px;background:#f1f1f1"></div>
<div class="abs" style="left:1440px;top:144px;width:11px;height:238px;background:#c1c1c1"></div>
<svg class="abs" style="left:1441px;top:132px" width="9" height="6"><path d="M0.5 5 L4.5 1 L8.5 5Z" fill="#a3a3a3"/></svg>
<svg class="abs" style="left:1441px;top:812px" width="9" height="6"><path d="M0.5 1 L4.5 5 L8.5 1Z" fill="#505050"/></svg>
<svg class="abs" style="left:1412px;top:87px" width="12" height="14" viewBox="0 0 12 14"><path d="M3.5 1.5 H8.5 M4.5 1.5 V6.5 M7.8 1.5 V6.5 M2 7 H10 M6 7 V12.5" stroke="#fff" stroke-width="1.5" fill="none"/></svg>
<svg class="abs" style="left:1434px;top:88px" width="12" height="12" viewBox="0 0 12 12"><path d="M1.5 1.5 L10.5 10.5 M10.5 1.5 L1.5 10.5" stroke="#fff" stroke-width="2.4" fill="none"/></svg>

<!-- TABS -->
<div class="abs" style="left:1454px;top:83px;width:1px;height:740px;background:#8ab4f8"></div>
<div class="abs" style="left:1455px;top:80px;width:45px;height:3px;background:#fff"></div>
<div class="abs" style="left:1455px;top:83px;width:45px;height:740px;background:#333"></div>
<div class="abs tab" style="top:83px;height:229px;background:linear-gradient(to right,#ffffdc,#ffffa6);color:#8b1c1c;letter-spacing:.74px"><b style="top:16px">Búsqueda con con<span style="background:#1a6fe0;color:#fff">d</span>iciones</b></div>
<div class="abs tab" style="top:313px;height:183px;background:linear-gradient(to right,#4c4c4c,#333);border-bottom:1px solid #1c1c1c"><b style="top:15px">Operaciones en Lote</b></div>
<div class="abs tab" style="top:497px;height:135px;background:linear-gradient(to right,#4c4c4c,#333);border-bottom:1px solid #1c1c1c"><b style="top:16px">Configuración</b></div>
</body>
</html>
